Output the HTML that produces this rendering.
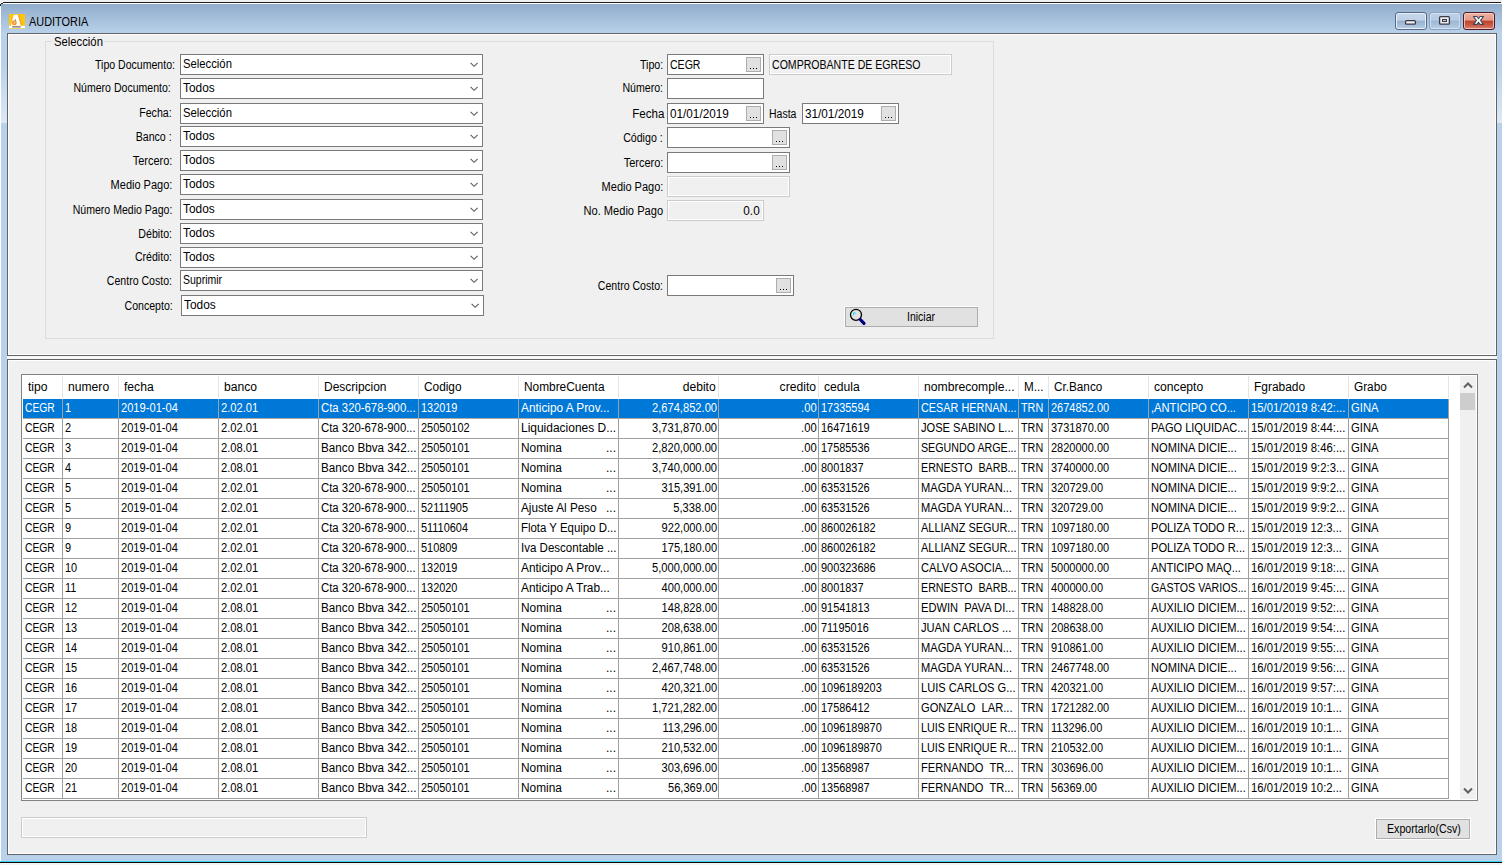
<!DOCTYPE html>
<html><head><meta charset="utf-8"><title>AUDITORIA</title>
<style>
html,body{margin:0;padding:0;width:1502px;height:865px;overflow:hidden;background:#F0F0F0}
body{position:relative;font-family:"Liberation Sans",sans-serif}
body div, body svg{position:absolute;box-sizing:content-box}
.t{white-space:pre}
</style></head><body>
<div style="left:0;top:0;width:1502px;height:865px;background:#F0F0F0"></div>
<div style="left:0px;top:5px;width:1px;height:857px;background:#FFFFFF"></div>
<div style="left:3px;top:2px;width:1498px;height:1px;background:#1E1E1E"></div>
<div style="left:1px;top:3px;width:2px;height:1px;background:#2A2A2A"></div>
<div style="left:0px;top:4px;width:1px;height:2px;background:#2A2A2A"></div>
<div style="left:3px;top:3px;width:1498px;height:1px;background:#FFFFFF"></div>
<div style="left:1px;top:4px;width:1501px;height:29px;background:linear-gradient(#92ADCB,#B9D1EA)"></div>
<div style="left:1px;top:33px;width:6px;height:828px;background:#B9D1EA"></div>
<div style="left:1497px;top:33px;width:5px;height:828px;background:#B9D1EA"></div>
<div style="left:1px;top:855px;width:1501px;height:6px;background:#B9D1EA"></div>
<div style="left:1px;top:66px;width:6px;height:57px;background:linear-gradient(#B9D1EA,#DDE9F6)"></div>
<div style="left:1497px;top:66px;width:5px;height:57px;background:linear-gradient(#B9D1EA,#DDE9F6)"></div>
<div style="left:0px;top:861px;width:1502px;height:1px;background:#38D6F0"></div>
<div style="left:0px;top:862px;width:1502px;height:1px;background:#080808"></div>
<div style="left:0px;top:863px;width:1502px;height:2px;background:#F4F4F4"></div>
<svg style="left:9px;top:14px" width="16" height="15" viewBox="0 0 16 15">
<rect x="0" y="0" width="16" height="15" fill="#FFC40C"/>
<polygon points="4.8,0.8 9,0.8 12,11.8 1.8,11.8" fill="#FFFFFF"/>
<polygon points="9,0.8 10.2,0.8 13.2,11.8 12,11.8" fill="#F0A418"/>
<circle cx="5.3" cy="8.8" r="2.5" fill="#F39A3A"/>
<circle cx="5.3" cy="8.8" r="1" fill="#F8C08A"/>
<rect x="6" y="5" width="1" height="2" fill="#8AA6C8"/>
<rect x="0" y="11.8" width="16" height="2.2" fill="#FFFFFF"/>
<rect x="3.2" y="12.4" width="8.5" height="1" fill="#4A4A4A"/>
<rect x="0" y="14" width="16" height="1" fill="#EBD27A"/>
</svg>
<div class="t" style="top:16px;font-size:12px;line-height:12px;color:#000;left:29px;"><span style="display:inline-block;transform:scaleX(0.91);transform-origin:left">AUDITORIA</span></div>
<div style="left:1395px;top:12px;width:30px;height:16px;border:1px solid #56698A;border-radius:3px;background:linear-gradient(#C4D6EA 0%,#BFD2E8 45%,#97B0CB 50%,#A5BFDA 75%,#B8CFE8 100%);box-shadow:inset 0 0 0 1px rgba(235,243,252,0.9)"></div>
<div style="left:1429px;top:12px;width:30px;height:16px;border:1px solid #8AA2BF;border-radius:3px;background:linear-gradient(#BCD0E6 0%,#B6CBE3 45%,#9EB8D3 50%,#A9C2DC 75%,#B7CEE6 100%);box-shadow:inset 0 0 0 1px rgba(230,240,250,0.6)"></div>
<div style="left:1463px;top:12px;width:30px;height:16px;border:1px solid #4A1A28;border-radius:3px;background:linear-gradient(#EDB0A2 0%,#E49B88 45%,#C0412A 50%,#C75A43 75%,#D88572 100%);box-shadow:inset 0 0 0 1px rgba(255,220,210,0.7)"></div>
<svg style="left:1404px;top:19px" width="13" height="7" viewBox="0 0 13 7">
<rect x="1.6" y="1.6" width="9.8" height="3.6" rx="1" fill="#F2F2F2" stroke="#3A3A48" stroke-width="1.3"/></svg>
<svg style="left:1438px;top:15px" width="13" height="11" viewBox="0 0 13 11">
<rect x="1.6" y="1.6" width="9.8" height="7.6" rx="1" fill="#EDEDED" stroke="#3A3A48" stroke-width="1.3"/>
<rect x="4.5" y="4.5" width="4" height="2" fill="#B5CAE2" stroke="#3A3A48" stroke-width="1"/></svg>
<svg style="left:1472px;top:15px" width="13" height="11" viewBox="0 0 13 11">
<polygon points="1.5,1.5 5,1.5 6.5,3.7 8,1.5 11.5,1.5 8.6,5.4 11.5,9.4 8,9.4 6.5,7.2 5,9.4 1.5,9.4 4.4,5.4" fill="#FFFFFF" stroke="#3C4456" stroke-width="1.1" stroke-linejoin="round"/>
</svg>
<div style="left:7px;top:33px;width:1488px;height:321px;border:1px solid #646464;background:#F0F0F0;box-shadow:inset 0 0 0 1px #FFFFFF"></div>
<div style="left:7px;top:356px;width:1490px;height:3px;background:#F8F8F8"></div>
<div style="left:7px;top:359px;width:1488px;height:494px;border:1px solid #646464;background:#F0F0F0;box-shadow:inset 0 0 0 1px #FFFFFF"></div>
<div style="left:45px;top:41px;width:947px;height:296px;border:1px solid #DCDCDC"></div>
<div style="left:52px;top:38px;width:52px;height:6px;background:#F0F0F0"></div>
<div class="t" style="top:36px;font-size:12px;line-height:12px;color:#000;left:54px;"><span style="display:inline-block;transform:scaleX(0.94);transform-origin:left">Selección</span></div>
<div style="left:180px;top:54px;width:301px;height:19px;border:1px solid #7A7A7A;background:#FFFFFF"></div>
<div class="t" style="top:59px;font-size:12px;line-height:12px;color:#000;right:1327px;text-align:right;"><span style="display:inline-block;transform:scaleX(0.879);transform-origin:right">Tipo Documento:</span></div>
<div class="t" style="top:58px;font-size:12px;line-height:12px;color:#000;left:183px;"><span style="display:inline-block;transform:scaleX(0.94);transform-origin:left">Selección</span></div>
<svg style="left:470px;top:62px" width="9" height="6" viewBox="0 0 9 6"><path d="M0.6,0.8 L4.1,4.3 L7.6,0.8" fill="none" stroke="#5A5A5A" stroke-width="1.1"/></svg>
<div style="left:180px;top:78px;width:301px;height:19px;border:1px solid #7A7A7A;background:#FFFFFF"></div>
<div class="t" style="top:82px;font-size:12px;line-height:12px;color:#000;right:1331px;text-align:right;"><span style="display:inline-block;transform:scaleX(0.878);transform-origin:right">Número Documento:</span></div>
<div class="t" style="top:82px;font-size:12px;line-height:12px;color:#000;left:183px;"><span style="display:inline-block;transform:scaleX(0.99);transform-origin:left">Todos</span></div>
<svg style="left:470px;top:86px" width="9" height="6" viewBox="0 0 9 6"><path d="M0.6,0.8 L4.1,4.3 L7.6,0.8" fill="none" stroke="#5A5A5A" stroke-width="1.1"/></svg>
<div style="left:180px;top:103px;width:301px;height:19px;border:1px solid #7A7A7A;background:#FFFFFF"></div>
<div class="t" style="top:107px;font-size:12px;line-height:12px;color:#000;right:1330px;text-align:right;"><span style="display:inline-block;transform:scaleX(0.885);transform-origin:right">Fecha:</span></div>
<div class="t" style="top:107px;font-size:12px;line-height:12px;color:#000;left:183px;"><span style="display:inline-block;transform:scaleX(0.94);transform-origin:left">Selección</span></div>
<svg style="left:470px;top:111px" width="9" height="6" viewBox="0 0 9 6"><path d="M0.6,0.8 L4.1,4.3 L7.6,0.8" fill="none" stroke="#5A5A5A" stroke-width="1.1"/></svg>
<div style="left:180px;top:126px;width:301px;height:19px;border:1px solid #7A7A7A;background:#FFFFFF"></div>
<div class="t" style="top:131px;font-size:12px;line-height:12px;color:#000;right:1330px;text-align:right;"><span style="display:inline-block;transform:scaleX(0.886);transform-origin:right">Banco :</span></div>
<div class="t" style="top:130px;font-size:12px;line-height:12px;color:#000;left:183px;"><span style="display:inline-block;transform:scaleX(0.99);transform-origin:left">Todos</span></div>
<svg style="left:470px;top:134px" width="9" height="6" viewBox="0 0 9 6"><path d="M0.6,0.8 L4.1,4.3 L7.6,0.8" fill="none" stroke="#5A5A5A" stroke-width="1.1"/></svg>
<div style="left:180px;top:150px;width:301px;height:19px;border:1px solid #7A7A7A;background:#FFFFFF"></div>
<div class="t" style="top:155px;font-size:12px;line-height:12px;color:#000;right:1330px;text-align:right;"><span style="display:inline-block;transform:scaleX(0.914);transform-origin:right">Tercero:</span></div>
<div class="t" style="top:154px;font-size:12px;line-height:12px;color:#000;left:183px;"><span style="display:inline-block;transform:scaleX(0.99);transform-origin:left">Todos</span></div>
<svg style="left:470px;top:158px" width="9" height="6" viewBox="0 0 9 6"><path d="M0.6,0.8 L4.1,4.3 L7.6,0.8" fill="none" stroke="#5A5A5A" stroke-width="1.1"/></svg>
<div style="left:180px;top:174px;width:301px;height:19px;border:1px solid #7A7A7A;background:#FFFFFF"></div>
<div class="t" style="top:179px;font-size:12px;line-height:12px;color:#000;right:1330px;text-align:right;"><span style="display:inline-block;transform:scaleX(0.917);transform-origin:right">Medio Pago:</span></div>
<div class="t" style="top:178px;font-size:12px;line-height:12px;color:#000;left:183px;"><span style="display:inline-block;transform:scaleX(0.99);transform-origin:left">Todos</span></div>
<svg style="left:470px;top:182px" width="9" height="6" viewBox="0 0 9 6"><path d="M0.6,0.8 L4.1,4.3 L7.6,0.8" fill="none" stroke="#5A5A5A" stroke-width="1.1"/></svg>
<div style="left:180px;top:199px;width:301px;height:19px;border:1px solid #7A7A7A;background:#FFFFFF"></div>
<div class="t" style="top:204px;font-size:12px;line-height:12px;color:#000;right:1330px;text-align:right;"><span style="display:inline-block;transform:scaleX(0.879);transform-origin:right">Número Medio Pago:</span></div>
<div class="t" style="top:203px;font-size:12px;line-height:12px;color:#000;left:183px;"><span style="display:inline-block;transform:scaleX(0.99);transform-origin:left">Todos</span></div>
<svg style="left:470px;top:207px" width="9" height="6" viewBox="0 0 9 6"><path d="M0.6,0.8 L4.1,4.3 L7.6,0.8" fill="none" stroke="#5A5A5A" stroke-width="1.1"/></svg>
<div style="left:180px;top:223px;width:301px;height:19px;border:1px solid #7A7A7A;background:#FFFFFF"></div>
<div class="t" style="top:228px;font-size:12px;line-height:12px;color:#000;right:1330px;text-align:right;"><span style="display:inline-block;transform:scaleX(0.885);transform-origin:right">Débito:</span></div>
<div class="t" style="top:227px;font-size:12px;line-height:12px;color:#000;left:183px;"><span style="display:inline-block;transform:scaleX(0.99);transform-origin:left">Todos</span></div>
<svg style="left:470px;top:231px" width="9" height="6" viewBox="0 0 9 6"><path d="M0.6,0.8 L4.1,4.3 L7.6,0.8" fill="none" stroke="#5A5A5A" stroke-width="1.1"/></svg>
<div style="left:180px;top:247px;width:301px;height:19px;border:1px solid #7A7A7A;background:#FFFFFF"></div>
<div class="t" style="top:251px;font-size:12px;line-height:12px;color:#000;right:1330px;text-align:right;"><span style="display:inline-block;transform:scaleX(0.884);transform-origin:right">Crédito:</span></div>
<div class="t" style="top:251px;font-size:12px;line-height:12px;color:#000;left:183px;"><span style="display:inline-block;transform:scaleX(0.99);transform-origin:left">Todos</span></div>
<svg style="left:470px;top:255px" width="9" height="6" viewBox="0 0 9 6"><path d="M0.6,0.8 L4.1,4.3 L7.6,0.8" fill="none" stroke="#5A5A5A" stroke-width="1.1"/></svg>
<div style="left:180px;top:270px;width:301px;height:19px;border:1px solid #7A7A7A;background:#FFFFFF"></div>
<div class="t" style="top:275px;font-size:12px;line-height:12px;color:#000;right:1330px;text-align:right;"><span style="display:inline-block;transform:scaleX(0.881);transform-origin:right">Centro Costo:</span></div>
<div class="t" style="top:274px;font-size:12px;line-height:12px;color:#000;left:183px;"><span style="display:inline-block;transform:scaleX(0.873);transform-origin:left">Suprimir</span></div>
<svg style="left:470px;top:278px" width="9" height="6" viewBox="0 0 9 6"><path d="M0.6,0.8 L4.1,4.3 L7.6,0.8" fill="none" stroke="#5A5A5A" stroke-width="1.1"/></svg>
<div style="left:181px;top:295px;width:301px;height:19px;border:1px solid #7A7A7A;background:#FFFFFF"></div>
<div class="t" style="top:300px;font-size:12px;line-height:12px;color:#000;right:1329px;text-align:right;"><span style="display:inline-block;transform:scaleX(0.881);transform-origin:right">Concepto:</span></div>
<div class="t" style="top:299px;font-size:12px;line-height:12px;color:#000;left:184px;"><span style="display:inline-block;transform:scaleX(0.99);transform-origin:left">Todos</span></div>
<svg style="left:471px;top:303px" width="9" height="6" viewBox="0 0 9 6"><path d="M0.6,0.8 L4.1,4.3 L7.6,0.8" fill="none" stroke="#5A5A5A" stroke-width="1.1"/></svg>
<div class="t" style="top:59px;font-size:12px;line-height:12px;color:#000;right:839px;text-align:right;"><span style="display:inline-block;transform:scaleX(0.89);transform-origin:right">Tipo:</span></div>
<div style="left:667px;top:54px;width:95px;height:19px;border:1px solid #7A7A7A;background:#FFFFFF"></div>
<div style="left:746px;top:57px;width:13px;height:13px;border:1px solid #ADADAD;background:#E1E1E1"></div>
<div style="left:750px;top:68px;width:1px;height:1px;background:#000"></div>
<div style="left:753px;top:68px;width:1px;height:1px;background:#000"></div>
<div style="left:756px;top:68px;width:1px;height:1px;background:#000"></div>
<div class="t" style="top:59px;font-size:12px;line-height:12px;color:#000;left:670px;"><span style="display:inline-block;transform:scaleX(0.879);transform-origin:left">CEGR</span></div>
<div style="left:769px;top:54px;width:181px;height:19px;border:1px solid #CCCCCC;background:#F0F0F0;box-shadow:inset 0 0 0 1px #FFFFFF"></div>
<div class="t" style="top:59px;font-size:12px;line-height:12px;color:#000;left:772px;"><span style="display:inline-block;transform:scaleX(0.88);transform-origin:left">COMPROBANTE DE EGRESO</span></div>
<div class="t" style="top:82px;font-size:12px;line-height:12px;color:#000;right:839px;text-align:right;"><span style="display:inline-block;transform:scaleX(0.883);transform-origin:right">Número:</span></div>
<div style="left:667px;top:78px;width:95px;height:19px;border:1px solid #7A7A7A;background:#FFFFFF"></div>
<div class="t" style="top:108px;font-size:12px;line-height:12px;color:#000;right:838px;text-align:right;"><span style="display:inline-block;transform:scaleX(0.961);transform-origin:right">Fecha</span></div>
<div style="left:667px;top:103px;width:95px;height:19px;border:1px solid #7A7A7A;background:#FFFFFF"></div>
<div style="left:746px;top:106px;width:13px;height:13px;border:1px solid #ADADAD;background:#E1E1E1"></div>
<div style="left:750px;top:117px;width:1px;height:1px;background:#000"></div>
<div style="left:753px;top:117px;width:1px;height:1px;background:#000"></div>
<div style="left:756px;top:117px;width:1px;height:1px;background:#000"></div>
<div class="t" style="top:108px;font-size:12px;line-height:12px;color:#000;left:670px;"><span style="display:inline-block;transform:scaleX(0.979);transform-origin:left">01/01/2019</span></div>
<div class="t" style="top:108px;font-size:12px;line-height:12px;color:#000;left:769px;"><span style="display:inline-block;transform:scaleX(0.874);transform-origin:left">Hasta</span></div>
<div style="left:802px;top:103px;width:95px;height:19px;border:1px solid #7A7A7A;background:#FFFFFF"></div>
<div style="left:881px;top:106px;width:13px;height:13px;border:1px solid #ADADAD;background:#E1E1E1"></div>
<div style="left:885px;top:117px;width:1px;height:1px;background:#000"></div>
<div style="left:888px;top:117px;width:1px;height:1px;background:#000"></div>
<div style="left:891px;top:117px;width:1px;height:1px;background:#000"></div>
<div class="t" style="top:108px;font-size:12px;line-height:12px;color:#000;left:805px;"><span style="display:inline-block;transform:scaleX(0.979);transform-origin:left">31/01/2019</span></div>
<div class="t" style="top:132px;font-size:12px;line-height:12px;color:#000;right:839px;text-align:right;"><span style="display:inline-block;transform:scaleX(0.885);transform-origin:right">Código :</span></div>
<div style="left:667px;top:127px;width:121px;height:19px;border:1px solid #7A7A7A;background:#FFFFFF"></div>
<div style="left:772px;top:130px;width:13px;height:13px;border:1px solid #ADADAD;background:#E1E1E1"></div>
<div style="left:776px;top:141px;width:1px;height:1px;background:#000"></div>
<div style="left:779px;top:141px;width:1px;height:1px;background:#000"></div>
<div style="left:782px;top:141px;width:1px;height:1px;background:#000"></div>
<div class="t" style="top:157px;font-size:12px;line-height:12px;color:#000;right:839px;text-align:right;"><span style="display:inline-block;transform:scaleX(0.914);transform-origin:right">Tercero:</span></div>
<div style="left:667px;top:152px;width:121px;height:19px;border:1px solid #7A7A7A;background:#FFFFFF"></div>
<div style="left:772px;top:155px;width:13px;height:13px;border:1px solid #ADADAD;background:#E1E1E1"></div>
<div style="left:776px;top:166px;width:1px;height:1px;background:#000"></div>
<div style="left:779px;top:166px;width:1px;height:1px;background:#000"></div>
<div style="left:782px;top:166px;width:1px;height:1px;background:#000"></div>
<div class="t" style="top:181px;font-size:12px;line-height:12px;color:#000;right:839px;text-align:right;"><span style="display:inline-block;transform:scaleX(0.917);transform-origin:right">Medio Pago:</span></div>
<div style="left:667px;top:176px;width:121px;height:19px;border:1px solid #CCCCCC;background:#F0F0F0;box-shadow:inset 0 0 0 1px #FFFFFF"></div>
<div class="t" style="top:205px;font-size:12px;line-height:12px;color:#000;right:839px;text-align:right;"><span style="display:inline-block;transform:scaleX(0.925);transform-origin:right">No. Medio Pago</span></div>
<div style="left:667px;top:200px;width:95px;height:19px;border:1px solid #CCCCCC;background:#F0F0F0;box-shadow:inset 0 0 0 1px #FFFFFF"></div>
<div class="t" style="top:205px;font-size:12px;line-height:12px;color:#000;right:742px;text-align:right;"><span style="display:inline-block;transform:scaleX(0.981);transform-origin:right">0.0</span></div>
<div class="t" style="top:280px;font-size:12px;line-height:12px;color:#000;right:839px;text-align:right;"><span style="display:inline-block;transform:scaleX(0.881);transform-origin:right">Centro Costo:</span></div>
<div style="left:667px;top:275px;width:125px;height:19px;border:1px solid #7A7A7A;background:#FFFFFF"></div>
<div style="left:776px;top:278px;width:13px;height:13px;border:1px solid #ADADAD;background:#E1E1E1"></div>
<div style="left:780px;top:289px;width:1px;height:1px;background:#000"></div>
<div style="left:783px;top:289px;width:1px;height:1px;background:#000"></div>
<div style="left:786px;top:289px;width:1px;height:1px;background:#000"></div>
<div style="left:844px;top:306px;width:132px;height:19px;border:1px solid #FFFFFF"></div>
<div style="left:845px;top:307px;width:131px;height:18px;border:1px solid #ADADAD;background:#E1E1E1"></div>
<svg style="left:849px;top:308px" width="18" height="18" viewBox="0 0 18 18">
<circle cx="7" cy="6.8" r="5.5" fill="none" stroke="#000" stroke-width="1.3"/>
<path d="M4.6,7.2 L4.6,5 L6.9,5" fill="none" stroke="#10E4F4" stroke-width="1.2"/>
<path d="M11.3,11.5 L15,15.4" stroke="#000080" stroke-width="3.2" stroke-linecap="round"/>
</svg>
<div class="t" style="top:311px;font-size:12px;line-height:12px;color:#000;left:907px;"><span style="display:inline-block;transform:scaleX(0.873);transform-origin:left">Iniciar</span></div>
<div style="left:21px;top:374px;width:1455px;height:425px;border:1px solid #828282;background:#FFFFFF"></div>
<div style="left:62px;top:376px;width:1px;height:22px;background:#E5E5E5"></div>
<div class="t" style="top:381px;font-size:12px;line-height:12px;color:#000;left:28px;white-space:pre;"><span style="display:inline-block;transform:scaleX(1.011);transform-origin:left">tipo</span></div>
<div style="left:118px;top:376px;width:1px;height:22px;background:#E5E5E5"></div>
<div class="t" style="top:381px;font-size:12px;line-height:12px;color:#000;left:68px;white-space:pre;"><span style="display:inline-block;transform:scaleX(1.011);transform-origin:left">numero</span></div>
<div style="left:218px;top:376px;width:1px;height:22px;background:#E5E5E5"></div>
<div class="t" style="top:381px;font-size:12px;line-height:12px;color:#000;left:124px;white-space:pre;"><span style="display:inline-block;transform:scaleX(1.011);transform-origin:left">fecha</span></div>
<div style="left:318px;top:376px;width:1px;height:22px;background:#E5E5E5"></div>
<div class="t" style="top:381px;font-size:12px;line-height:12px;color:#000;left:224px;white-space:pre;"><span style="display:inline-block;transform:scaleX(1.011);transform-origin:left">banco</span></div>
<div style="left:418px;top:376px;width:1px;height:22px;background:#E5E5E5"></div>
<div class="t" style="top:381px;font-size:12px;line-height:12px;color:#000;left:324px;white-space:pre;"><span style="display:inline-block;transform:scaleX(0.997);transform-origin:left">Descripcion</span></div>
<div style="left:518px;top:376px;width:1px;height:22px;background:#E5E5E5"></div>
<div class="t" style="top:381px;font-size:12px;line-height:12px;color:#000;left:424px;white-space:pre;"><span style="display:inline-block;transform:scaleX(0.987);transform-origin:left">Codigo</span></div>
<div style="left:618px;top:376px;width:1px;height:22px;background:#E5E5E5"></div>
<div class="t" style="top:381px;font-size:12px;line-height:12px;color:#000;left:524px;white-space:pre;"><span style="display:inline-block;transform:scaleX(0.989);transform-origin:left">NombreCuenta</span></div>
<div style="left:718px;top:376px;width:1px;height:22px;background:#E5E5E5"></div>
<div class="t" style="top:381px;font-size:12px;line-height:12px;color:#000;right:786px;text-align:right;"><span style="display:inline-block;transform:scaleX(1.011);transform-origin:right">debito</span></div>
<div style="left:818px;top:376px;width:1px;height:22px;background:#E5E5E5"></div>
<div class="t" style="top:381px;font-size:12px;line-height:12px;color:#000;right:686px;text-align:right;"><span style="display:inline-block;transform:scaleX(1.011);transform-origin:right">credito</span></div>
<div style="left:918px;top:376px;width:1px;height:22px;background:#E5E5E5"></div>
<div class="t" style="top:381px;font-size:12px;line-height:12px;color:#000;left:824px;white-space:pre;"><span style="display:inline-block;transform:scaleX(1.011);transform-origin:left">cedula</span></div>
<div style="left:1018px;top:376px;width:1px;height:22px;background:#E5E5E5"></div>
<div class="t" style="top:381px;font-size:12px;line-height:12px;color:#000;left:924px;white-space:pre;"><span style="display:inline-block;transform:scaleX(1.014);transform-origin:left">nombrecomple...</span></div>
<div style="left:1048px;top:376px;width:1px;height:22px;background:#E5E5E5"></div>
<div class="t" style="top:381px;font-size:12px;line-height:12px;color:#000;left:1024px;white-space:pre;"><span style="display:inline-block;transform:scaleX(0.974);transform-origin:left">M...</span></div>
<div style="left:1148px;top:376px;width:1px;height:22px;background:#E5E5E5"></div>
<div class="t" style="top:381px;font-size:12px;line-height:12px;color:#000;left:1054px;white-space:pre;"><span style="display:inline-block;transform:scaleX(0.978);transform-origin:left">Cr.Banco</span></div>
<div style="left:1248px;top:376px;width:1px;height:22px;background:#E5E5E5"></div>
<div class="t" style="top:381px;font-size:12px;line-height:12px;color:#000;left:1154px;white-space:pre;"><span style="display:inline-block;transform:scaleX(1.011);transform-origin:left">concepto</span></div>
<div style="left:1348px;top:376px;width:1px;height:22px;background:#E5E5E5"></div>
<div class="t" style="top:381px;font-size:12px;line-height:12px;color:#000;left:1254px;white-space:pre;"><span style="display:inline-block;transform:scaleX(0.996);transform-origin:left">Fgrabado</span></div>
<div style="left:1448px;top:376px;width:1px;height:22px;background:#E5E5E5"></div>
<div class="t" style="top:381px;font-size:12px;line-height:12px;color:#000;left:1354px;white-space:pre;"><span style="display:inline-block;transform:scaleX(0.982);transform-origin:left">Grabo</span></div>
<div style="left:23px;top:399px;width:1426px;height:19px;background:#0078D7"></div>
<div style="left:23px;top:418px;width:1426px;height:1px;background:#B0A8A0"></div>
<div style="left:62px;top:399px;width:1px;height:20px;background:#A0A0A0"></div>
<div style="left:23px;top:399px;width:39px;height:19px;overflow:hidden"><div class="t" style="left:2px;top:3px;font-size:12px;line-height:12px;color:#FFFFFF"><span style="display:inline-block;transform:scaleX(0.86);transform-origin:left">CEGR</span></div></div>
<div style="left:118px;top:399px;width:1px;height:20px;background:#A0A0A0"></div>
<div style="left:63px;top:399px;width:55px;height:19px;overflow:hidden"><div class="t" style="left:2px;top:3px;font-size:12px;line-height:12px;color:#FFFFFF"><span style="display:inline-block;transform:scaleX(0.91);transform-origin:left">1</span></div></div>
<div style="left:218px;top:399px;width:1px;height:20px;background:#A0A0A0"></div>
<div style="left:119px;top:399px;width:99px;height:19px;overflow:hidden"><div class="t" style="left:2px;top:3px;font-size:12px;line-height:12px;color:#FFFFFF"><span style="display:inline-block;transform:scaleX(0.927);transform-origin:left">2019-01-04</span></div></div>
<div style="left:318px;top:399px;width:1px;height:20px;background:#A0A0A0"></div>
<div style="left:219px;top:399px;width:99px;height:19px;overflow:hidden"><div class="t" style="left:2px;top:3px;font-size:12px;line-height:12px;color:#FFFFFF"><span style="display:inline-block;transform:scaleX(0.932);transform-origin:left">2.02.01</span></div></div>
<div style="left:418px;top:399px;width:1px;height:20px;background:#A0A0A0"></div>
<div style="left:319px;top:399px;width:99px;height:19px;overflow:hidden"><div class="t" style="left:2px;top:3px;font-size:12px;line-height:12px;color:#FFFFFF"><span style="display:inline-block;transform:scaleX(0.946);transform-origin:left">Cta 320-678-900...</span></div></div>
<div style="left:518px;top:399px;width:1px;height:20px;background:#A0A0A0"></div>
<div style="left:419px;top:399px;width:99px;height:19px;overflow:hidden"><div class="t" style="left:2px;top:3px;font-size:12px;line-height:12px;color:#FFFFFF"><span style="display:inline-block;transform:scaleX(0.91);transform-origin:left">132019</span></div></div>
<div style="left:618px;top:399px;width:1px;height:20px;background:#A0A0A0"></div>
<div style="left:519px;top:399px;width:99px;height:19px;overflow:hidden"><div class="t" style="left:2px;top:3px;font-size:12px;line-height:12px;color:#FFFFFF"><span style="display:inline-block;transform:scaleX(0.986);transform-origin:left">Anticipo A Prov...</span></div></div>
<div style="left:718px;top:399px;width:1px;height:20px;background:#A0A0A0"></div>
<div class="t" style="top:402px;font-size:12px;line-height:12px;color:#FFFFFF;right:785px;text-align:right;"><span style="display:inline-block;transform:scaleX(0.929);transform-origin:right">2,674,852.00</span></div>
<div style="left:818px;top:399px;width:1px;height:20px;background:#A0A0A0"></div>
<div class="t" style="top:402px;font-size:12px;line-height:12px;color:#FFFFFF;right:685px;text-align:right;"><span style="display:inline-block;transform:scaleX(0.936);transform-origin:right">.00</span></div>
<div style="left:918px;top:399px;width:1px;height:20px;background:#A0A0A0"></div>
<div style="left:819px;top:399px;width:99px;height:19px;overflow:hidden"><div class="t" style="left:2px;top:3px;font-size:12px;line-height:12px;color:#FFFFFF"><span style="display:inline-block;transform:scaleX(0.91);transform-origin:left">17335594</span></div></div>
<div style="left:1018px;top:399px;width:1px;height:20px;background:#A0A0A0"></div>
<div style="left:919px;top:399px;width:99px;height:19px;overflow:hidden"><div class="t" style="left:2px;top:3px;font-size:12px;line-height:12px;color:#FFFFFF"><span style="display:inline-block;transform:scaleX(0.906);transform-origin:left">CESAR HERNAN...</span></div></div>
<div style="left:1048px;top:399px;width:1px;height:20px;background:#A0A0A0"></div>
<div style="left:1019px;top:399px;width:29px;height:19px;overflow:hidden"><div class="t" style="left:2px;top:3px;font-size:12px;line-height:12px;color:#FFFFFF"><span style="display:inline-block;transform:scaleX(0.9);transform-origin:left">TRN</span></div></div>
<div style="left:1148px;top:399px;width:1px;height:20px;background:#A0A0A0"></div>
<div style="left:1049px;top:399px;width:99px;height:19px;overflow:hidden"><div class="t" style="left:2px;top:3px;font-size:12px;line-height:12px;color:#FFFFFF"><span style="display:inline-block;transform:scaleX(0.917);transform-origin:left">2674852.00</span></div></div>
<div style="left:1248px;top:399px;width:1px;height:20px;background:#A0A0A0"></div>
<div style="left:1149px;top:399px;width:99px;height:19px;overflow:hidden"><div class="t" style="left:2px;top:3px;font-size:12px;line-height:12px;color:#FFFFFF"><span style="display:inline-block;transform:scaleX(0.93);transform-origin:left">,ANTICIPO CO...</span></div></div>
<div style="left:1348px;top:399px;width:1px;height:20px;background:#A0A0A0"></div>
<div style="left:1249px;top:399px;width:99px;height:19px;overflow:hidden"><div class="t" style="left:2px;top:3px;font-size:12px;line-height:12px;color:#FFFFFF"><span style="display:inline-block;transform:scaleX(0.943);transform-origin:left">15/01/2019 8:42:...</span></div></div>
<div style="left:1448px;top:399px;width:1px;height:20px;background:#A0A0A0"></div>
<div style="left:1349px;top:399px;width:99px;height:19px;overflow:hidden"><div class="t" style="left:2px;top:3px;font-size:12px;line-height:12px;color:#FFFFFF"><span style="display:inline-block;transform:scaleX(0.94);transform-origin:left">GINA</span></div></div>
<div style="left:23px;top:438px;width:1426px;height:1px;background:#A0A0A0"></div>
<div style="left:62px;top:419px;width:1px;height:20px;background:#A0A0A0"></div>
<div style="left:23px;top:419px;width:39px;height:19px;overflow:hidden"><div class="t" style="left:2px;top:3px;font-size:12px;line-height:12px;color:#000000"><span style="display:inline-block;transform:scaleX(0.86);transform-origin:left">CEGR</span></div></div>
<div style="left:118px;top:419px;width:1px;height:20px;background:#A0A0A0"></div>
<div style="left:63px;top:419px;width:55px;height:19px;overflow:hidden"><div class="t" style="left:2px;top:3px;font-size:12px;line-height:12px;color:#000000"><span style="display:inline-block;transform:scaleX(0.91);transform-origin:left">2</span></div></div>
<div style="left:218px;top:419px;width:1px;height:20px;background:#A0A0A0"></div>
<div style="left:119px;top:419px;width:99px;height:19px;overflow:hidden"><div class="t" style="left:2px;top:3px;font-size:12px;line-height:12px;color:#000000"><span style="display:inline-block;transform:scaleX(0.927);transform-origin:left">2019-01-04</span></div></div>
<div style="left:318px;top:419px;width:1px;height:20px;background:#A0A0A0"></div>
<div style="left:219px;top:419px;width:99px;height:19px;overflow:hidden"><div class="t" style="left:2px;top:3px;font-size:12px;line-height:12px;color:#000000"><span style="display:inline-block;transform:scaleX(0.932);transform-origin:left">2.02.01</span></div></div>
<div style="left:418px;top:419px;width:1px;height:20px;background:#A0A0A0"></div>
<div style="left:319px;top:419px;width:99px;height:19px;overflow:hidden"><div class="t" style="left:2px;top:3px;font-size:12px;line-height:12px;color:#000000"><span style="display:inline-block;transform:scaleX(0.946);transform-origin:left">Cta 320-678-900...</span></div></div>
<div style="left:518px;top:419px;width:1px;height:20px;background:#A0A0A0"></div>
<div style="left:419px;top:419px;width:99px;height:19px;overflow:hidden"><div class="t" style="left:2px;top:3px;font-size:12px;line-height:12px;color:#000000"><span style="display:inline-block;transform:scaleX(0.91);transform-origin:left">25050102</span></div></div>
<div style="left:618px;top:419px;width:1px;height:20px;background:#A0A0A0"></div>
<div style="left:519px;top:419px;width:99px;height:19px;overflow:hidden"><div class="t" style="left:2px;top:3px;font-size:12px;line-height:12px;color:#000000"><span style="display:inline-block;transform:scaleX(0.997);transform-origin:left">Liquidaciones D...</span></div></div>
<div style="left:718px;top:419px;width:1px;height:20px;background:#A0A0A0"></div>
<div class="t" style="top:422px;font-size:12px;line-height:12px;color:#000000;right:785px;text-align:right;"><span style="display:inline-block;transform:scaleX(0.929);transform-origin:right">3,731,870.00</span></div>
<div style="left:818px;top:419px;width:1px;height:20px;background:#A0A0A0"></div>
<div class="t" style="top:422px;font-size:12px;line-height:12px;color:#000000;right:685px;text-align:right;"><span style="display:inline-block;transform:scaleX(0.936);transform-origin:right">.00</span></div>
<div style="left:918px;top:419px;width:1px;height:20px;background:#A0A0A0"></div>
<div style="left:819px;top:419px;width:99px;height:19px;overflow:hidden"><div class="t" style="left:2px;top:3px;font-size:12px;line-height:12px;color:#000000"><span style="display:inline-block;transform:scaleX(0.91);transform-origin:left">16471619</span></div></div>
<div style="left:1018px;top:419px;width:1px;height:20px;background:#A0A0A0"></div>
<div style="left:919px;top:419px;width:99px;height:19px;overflow:hidden"><div class="t" style="left:2px;top:3px;font-size:12px;line-height:12px;color:#000000"><span style="display:inline-block;transform:scaleX(0.926);transform-origin:left">JOSE SABINO L...</span></div></div>
<div style="left:1048px;top:419px;width:1px;height:20px;background:#A0A0A0"></div>
<div style="left:1019px;top:419px;width:29px;height:19px;overflow:hidden"><div class="t" style="left:2px;top:3px;font-size:12px;line-height:12px;color:#000000"><span style="display:inline-block;transform:scaleX(0.9);transform-origin:left">TRN</span></div></div>
<div style="left:1148px;top:419px;width:1px;height:20px;background:#A0A0A0"></div>
<div style="left:1049px;top:419px;width:99px;height:19px;overflow:hidden"><div class="t" style="left:2px;top:3px;font-size:12px;line-height:12px;color:#000000"><span style="display:inline-block;transform:scaleX(0.917);transform-origin:left">3731870.00</span></div></div>
<div style="left:1248px;top:419px;width:1px;height:20px;background:#A0A0A0"></div>
<div style="left:1149px;top:419px;width:99px;height:19px;overflow:hidden"><div class="t" style="left:2px;top:3px;font-size:12px;line-height:12px;color:#000000"><span style="display:inline-block;transform:scaleX(0.92);transform-origin:left">PAGO LIQUIDAC...</span></div></div>
<div style="left:1348px;top:419px;width:1px;height:20px;background:#A0A0A0"></div>
<div style="left:1249px;top:419px;width:99px;height:19px;overflow:hidden"><div class="t" style="left:2px;top:3px;font-size:12px;line-height:12px;color:#000000"><span style="display:inline-block;transform:scaleX(0.943);transform-origin:left">15/01/2019 8:44:...</span></div></div>
<div style="left:1448px;top:419px;width:1px;height:20px;background:#A0A0A0"></div>
<div style="left:1349px;top:419px;width:99px;height:19px;overflow:hidden"><div class="t" style="left:2px;top:3px;font-size:12px;line-height:12px;color:#000000"><span style="display:inline-block;transform:scaleX(0.94);transform-origin:left">GINA</span></div></div>
<div style="left:23px;top:458px;width:1426px;height:1px;background:#A0A0A0"></div>
<div style="left:62px;top:439px;width:1px;height:20px;background:#A0A0A0"></div>
<div style="left:23px;top:439px;width:39px;height:19px;overflow:hidden"><div class="t" style="left:2px;top:3px;font-size:12px;line-height:12px;color:#000000"><span style="display:inline-block;transform:scaleX(0.86);transform-origin:left">CEGR</span></div></div>
<div style="left:118px;top:439px;width:1px;height:20px;background:#A0A0A0"></div>
<div style="left:63px;top:439px;width:55px;height:19px;overflow:hidden"><div class="t" style="left:2px;top:3px;font-size:12px;line-height:12px;color:#000000"><span style="display:inline-block;transform:scaleX(0.91);transform-origin:left">3</span></div></div>
<div style="left:218px;top:439px;width:1px;height:20px;background:#A0A0A0"></div>
<div style="left:119px;top:439px;width:99px;height:19px;overflow:hidden"><div class="t" style="left:2px;top:3px;font-size:12px;line-height:12px;color:#000000"><span style="display:inline-block;transform:scaleX(0.927);transform-origin:left">2019-01-04</span></div></div>
<div style="left:318px;top:439px;width:1px;height:20px;background:#A0A0A0"></div>
<div style="left:219px;top:439px;width:99px;height:19px;overflow:hidden"><div class="t" style="left:2px;top:3px;font-size:12px;line-height:12px;color:#000000"><span style="display:inline-block;transform:scaleX(0.932);transform-origin:left">2.08.01</span></div></div>
<div style="left:418px;top:439px;width:1px;height:20px;background:#A0A0A0"></div>
<div style="left:319px;top:439px;width:99px;height:19px;overflow:hidden"><div class="t" style="left:2px;top:3px;font-size:12px;line-height:12px;color:#000000"><span style="display:inline-block;transform:scaleX(0.974);transform-origin:left">Banco Bbva 342...</span></div></div>
<div style="left:518px;top:439px;width:1px;height:20px;background:#A0A0A0"></div>
<div style="left:419px;top:439px;width:99px;height:19px;overflow:hidden"><div class="t" style="left:2px;top:3px;font-size:12px;line-height:12px;color:#000000"><span style="display:inline-block;transform:scaleX(0.91);transform-origin:left">25050101</span></div></div>
<div style="left:618px;top:439px;width:1px;height:20px;background:#A0A0A0"></div>
<div class="t" style="top:442px;font-size:12px;line-height:12px;color:#000000;left:521px;"><span style="display:inline-block;transform:scaleX(0.989);transform-origin:left">Nomina</span></div>
<div class="t" style="top:442px;font-size:12px;line-height:12px;color:#000000;right:886px;text-align:right;">...</div>
<div style="left:718px;top:439px;width:1px;height:20px;background:#A0A0A0"></div>
<div class="t" style="top:442px;font-size:12px;line-height:12px;color:#000000;right:785px;text-align:right;"><span style="display:inline-block;transform:scaleX(0.929);transform-origin:right">2,820,000.00</span></div>
<div style="left:818px;top:439px;width:1px;height:20px;background:#A0A0A0"></div>
<div class="t" style="top:442px;font-size:12px;line-height:12px;color:#000000;right:685px;text-align:right;"><span style="display:inline-block;transform:scaleX(0.936);transform-origin:right">.00</span></div>
<div style="left:918px;top:439px;width:1px;height:20px;background:#A0A0A0"></div>
<div style="left:819px;top:439px;width:99px;height:19px;overflow:hidden"><div class="t" style="left:2px;top:3px;font-size:12px;line-height:12px;color:#000000"><span style="display:inline-block;transform:scaleX(0.91);transform-origin:left">17585536</span></div></div>
<div style="left:1018px;top:439px;width:1px;height:20px;background:#A0A0A0"></div>
<div style="left:919px;top:439px;width:99px;height:19px;overflow:hidden"><div class="t" style="left:2px;top:3px;font-size:12px;line-height:12px;color:#000000"><span style="display:inline-block;transform:scaleX(0.89);transform-origin:left">SEGUNDO ARGE...</span></div></div>
<div style="left:1048px;top:439px;width:1px;height:20px;background:#A0A0A0"></div>
<div style="left:1019px;top:439px;width:29px;height:19px;overflow:hidden"><div class="t" style="left:2px;top:3px;font-size:12px;line-height:12px;color:#000000"><span style="display:inline-block;transform:scaleX(0.9);transform-origin:left">TRN</span></div></div>
<div style="left:1148px;top:439px;width:1px;height:20px;background:#A0A0A0"></div>
<div style="left:1049px;top:439px;width:99px;height:19px;overflow:hidden"><div class="t" style="left:2px;top:3px;font-size:12px;line-height:12px;color:#000000"><span style="display:inline-block;transform:scaleX(0.917);transform-origin:left">2820000.00</span></div></div>
<div style="left:1248px;top:439px;width:1px;height:20px;background:#A0A0A0"></div>
<div style="left:1149px;top:439px;width:99px;height:19px;overflow:hidden"><div class="t" style="left:2px;top:3px;font-size:12px;line-height:12px;color:#000000"><span style="display:inline-block;transform:scaleX(0.925);transform-origin:left">NOMINA DICIE...</span></div></div>
<div style="left:1348px;top:439px;width:1px;height:20px;background:#A0A0A0"></div>
<div style="left:1249px;top:439px;width:99px;height:19px;overflow:hidden"><div class="t" style="left:2px;top:3px;font-size:12px;line-height:12px;color:#000000"><span style="display:inline-block;transform:scaleX(0.943);transform-origin:left">15/01/2019 8:46:...</span></div></div>
<div style="left:1448px;top:439px;width:1px;height:20px;background:#A0A0A0"></div>
<div style="left:1349px;top:439px;width:99px;height:19px;overflow:hidden"><div class="t" style="left:2px;top:3px;font-size:12px;line-height:12px;color:#000000"><span style="display:inline-block;transform:scaleX(0.94);transform-origin:left">GINA</span></div></div>
<div style="left:23px;top:478px;width:1426px;height:1px;background:#A0A0A0"></div>
<div style="left:62px;top:459px;width:1px;height:20px;background:#A0A0A0"></div>
<div style="left:23px;top:459px;width:39px;height:19px;overflow:hidden"><div class="t" style="left:2px;top:3px;font-size:12px;line-height:12px;color:#000000"><span style="display:inline-block;transform:scaleX(0.86);transform-origin:left">CEGR</span></div></div>
<div style="left:118px;top:459px;width:1px;height:20px;background:#A0A0A0"></div>
<div style="left:63px;top:459px;width:55px;height:19px;overflow:hidden"><div class="t" style="left:2px;top:3px;font-size:12px;line-height:12px;color:#000000"><span style="display:inline-block;transform:scaleX(0.91);transform-origin:left">4</span></div></div>
<div style="left:218px;top:459px;width:1px;height:20px;background:#A0A0A0"></div>
<div style="left:119px;top:459px;width:99px;height:19px;overflow:hidden"><div class="t" style="left:2px;top:3px;font-size:12px;line-height:12px;color:#000000"><span style="display:inline-block;transform:scaleX(0.927);transform-origin:left">2019-01-04</span></div></div>
<div style="left:318px;top:459px;width:1px;height:20px;background:#A0A0A0"></div>
<div style="left:219px;top:459px;width:99px;height:19px;overflow:hidden"><div class="t" style="left:2px;top:3px;font-size:12px;line-height:12px;color:#000000"><span style="display:inline-block;transform:scaleX(0.932);transform-origin:left">2.08.01</span></div></div>
<div style="left:418px;top:459px;width:1px;height:20px;background:#A0A0A0"></div>
<div style="left:319px;top:459px;width:99px;height:19px;overflow:hidden"><div class="t" style="left:2px;top:3px;font-size:12px;line-height:12px;color:#000000"><span style="display:inline-block;transform:scaleX(0.974);transform-origin:left">Banco Bbva 342...</span></div></div>
<div style="left:518px;top:459px;width:1px;height:20px;background:#A0A0A0"></div>
<div style="left:419px;top:459px;width:99px;height:19px;overflow:hidden"><div class="t" style="left:2px;top:3px;font-size:12px;line-height:12px;color:#000000"><span style="display:inline-block;transform:scaleX(0.91);transform-origin:left">25050101</span></div></div>
<div style="left:618px;top:459px;width:1px;height:20px;background:#A0A0A0"></div>
<div class="t" style="top:462px;font-size:12px;line-height:12px;color:#000000;left:521px;"><span style="display:inline-block;transform:scaleX(0.989);transform-origin:left">Nomina</span></div>
<div class="t" style="top:462px;font-size:12px;line-height:12px;color:#000000;right:886px;text-align:right;">...</div>
<div style="left:718px;top:459px;width:1px;height:20px;background:#A0A0A0"></div>
<div class="t" style="top:462px;font-size:12px;line-height:12px;color:#000000;right:785px;text-align:right;"><span style="display:inline-block;transform:scaleX(0.929);transform-origin:right">3,740,000.00</span></div>
<div style="left:818px;top:459px;width:1px;height:20px;background:#A0A0A0"></div>
<div class="t" style="top:462px;font-size:12px;line-height:12px;color:#000000;right:685px;text-align:right;"><span style="display:inline-block;transform:scaleX(0.936);transform-origin:right">.00</span></div>
<div style="left:918px;top:459px;width:1px;height:20px;background:#A0A0A0"></div>
<div style="left:819px;top:459px;width:99px;height:19px;overflow:hidden"><div class="t" style="left:2px;top:3px;font-size:12px;line-height:12px;color:#000000"><span style="display:inline-block;transform:scaleX(0.91);transform-origin:left">8001837</span></div></div>
<div style="left:1018px;top:459px;width:1px;height:20px;background:#A0A0A0"></div>
<div style="left:919px;top:459px;width:99px;height:19px;overflow:hidden"><div class="t" style="left:2px;top:3px;font-size:12px;line-height:12px;color:#000000"><span style="display:inline-block;transform:scaleX(0.891);transform-origin:left">ERNESTO  BARB...</span></div></div>
<div style="left:1048px;top:459px;width:1px;height:20px;background:#A0A0A0"></div>
<div style="left:1019px;top:459px;width:29px;height:19px;overflow:hidden"><div class="t" style="left:2px;top:3px;font-size:12px;line-height:12px;color:#000000"><span style="display:inline-block;transform:scaleX(0.9);transform-origin:left">TRN</span></div></div>
<div style="left:1148px;top:459px;width:1px;height:20px;background:#A0A0A0"></div>
<div style="left:1049px;top:459px;width:99px;height:19px;overflow:hidden"><div class="t" style="left:2px;top:3px;font-size:12px;line-height:12px;color:#000000"><span style="display:inline-block;transform:scaleX(0.917);transform-origin:left">3740000.00</span></div></div>
<div style="left:1248px;top:459px;width:1px;height:20px;background:#A0A0A0"></div>
<div style="left:1149px;top:459px;width:99px;height:19px;overflow:hidden"><div class="t" style="left:2px;top:3px;font-size:12px;line-height:12px;color:#000000"><span style="display:inline-block;transform:scaleX(0.925);transform-origin:left">NOMINA DICIE...</span></div></div>
<div style="left:1348px;top:459px;width:1px;height:20px;background:#A0A0A0"></div>
<div style="left:1249px;top:459px;width:99px;height:19px;overflow:hidden"><div class="t" style="left:2px;top:3px;font-size:12px;line-height:12px;color:#000000"><span style="display:inline-block;transform:scaleX(0.943);transform-origin:left">15/01/2019 9:2:3...</span></div></div>
<div style="left:1448px;top:459px;width:1px;height:20px;background:#A0A0A0"></div>
<div style="left:1349px;top:459px;width:99px;height:19px;overflow:hidden"><div class="t" style="left:2px;top:3px;font-size:12px;line-height:12px;color:#000000"><span style="display:inline-block;transform:scaleX(0.94);transform-origin:left">GINA</span></div></div>
<div style="left:23px;top:498px;width:1426px;height:1px;background:#A0A0A0"></div>
<div style="left:62px;top:479px;width:1px;height:20px;background:#A0A0A0"></div>
<div style="left:23px;top:479px;width:39px;height:19px;overflow:hidden"><div class="t" style="left:2px;top:3px;font-size:12px;line-height:12px;color:#000000"><span style="display:inline-block;transform:scaleX(0.86);transform-origin:left">CEGR</span></div></div>
<div style="left:118px;top:479px;width:1px;height:20px;background:#A0A0A0"></div>
<div style="left:63px;top:479px;width:55px;height:19px;overflow:hidden"><div class="t" style="left:2px;top:3px;font-size:12px;line-height:12px;color:#000000"><span style="display:inline-block;transform:scaleX(0.91);transform-origin:left">5</span></div></div>
<div style="left:218px;top:479px;width:1px;height:20px;background:#A0A0A0"></div>
<div style="left:119px;top:479px;width:99px;height:19px;overflow:hidden"><div class="t" style="left:2px;top:3px;font-size:12px;line-height:12px;color:#000000"><span style="display:inline-block;transform:scaleX(0.927);transform-origin:left">2019-01-04</span></div></div>
<div style="left:318px;top:479px;width:1px;height:20px;background:#A0A0A0"></div>
<div style="left:219px;top:479px;width:99px;height:19px;overflow:hidden"><div class="t" style="left:2px;top:3px;font-size:12px;line-height:12px;color:#000000"><span style="display:inline-block;transform:scaleX(0.932);transform-origin:left">2.02.01</span></div></div>
<div style="left:418px;top:479px;width:1px;height:20px;background:#A0A0A0"></div>
<div style="left:319px;top:479px;width:99px;height:19px;overflow:hidden"><div class="t" style="left:2px;top:3px;font-size:12px;line-height:12px;color:#000000"><span style="display:inline-block;transform:scaleX(0.946);transform-origin:left">Cta 320-678-900...</span></div></div>
<div style="left:518px;top:479px;width:1px;height:20px;background:#A0A0A0"></div>
<div style="left:419px;top:479px;width:99px;height:19px;overflow:hidden"><div class="t" style="left:2px;top:3px;font-size:12px;line-height:12px;color:#000000"><span style="display:inline-block;transform:scaleX(0.91);transform-origin:left">25050101</span></div></div>
<div style="left:618px;top:479px;width:1px;height:20px;background:#A0A0A0"></div>
<div class="t" style="top:482px;font-size:12px;line-height:12px;color:#000000;left:521px;"><span style="display:inline-block;transform:scaleX(0.989);transform-origin:left">Nomina</span></div>
<div class="t" style="top:482px;font-size:12px;line-height:12px;color:#000000;right:886px;text-align:right;">...</div>
<div style="left:718px;top:479px;width:1px;height:20px;background:#A0A0A0"></div>
<div class="t" style="top:482px;font-size:12px;line-height:12px;color:#000000;right:785px;text-align:right;"><span style="display:inline-block;transform:scaleX(0.924);transform-origin:right">315,391.00</span></div>
<div style="left:818px;top:479px;width:1px;height:20px;background:#A0A0A0"></div>
<div class="t" style="top:482px;font-size:12px;line-height:12px;color:#000000;right:685px;text-align:right;"><span style="display:inline-block;transform:scaleX(0.936);transform-origin:right">.00</span></div>
<div style="left:918px;top:479px;width:1px;height:20px;background:#A0A0A0"></div>
<div style="left:819px;top:479px;width:99px;height:19px;overflow:hidden"><div class="t" style="left:2px;top:3px;font-size:12px;line-height:12px;color:#000000"><span style="display:inline-block;transform:scaleX(0.91);transform-origin:left">63531526</span></div></div>
<div style="left:1018px;top:479px;width:1px;height:20px;background:#A0A0A0"></div>
<div style="left:919px;top:479px;width:99px;height:19px;overflow:hidden"><div class="t" style="left:2px;top:3px;font-size:12px;line-height:12px;color:#000000"><span style="display:inline-block;transform:scaleX(0.924);transform-origin:left">MAGDA YURAN...</span></div></div>
<div style="left:1048px;top:479px;width:1px;height:20px;background:#A0A0A0"></div>
<div style="left:1019px;top:479px;width:29px;height:19px;overflow:hidden"><div class="t" style="left:2px;top:3px;font-size:12px;line-height:12px;color:#000000"><span style="display:inline-block;transform:scaleX(0.9);transform-origin:left">TRN</span></div></div>
<div style="left:1148px;top:479px;width:1px;height:20px;background:#A0A0A0"></div>
<div style="left:1049px;top:479px;width:99px;height:19px;overflow:hidden"><div class="t" style="left:2px;top:3px;font-size:12px;line-height:12px;color:#000000"><span style="display:inline-block;transform:scaleX(0.918);transform-origin:left">320729.00</span></div></div>
<div style="left:1248px;top:479px;width:1px;height:20px;background:#A0A0A0"></div>
<div style="left:1149px;top:479px;width:99px;height:19px;overflow:hidden"><div class="t" style="left:2px;top:3px;font-size:12px;line-height:12px;color:#000000"><span style="display:inline-block;transform:scaleX(0.925);transform-origin:left">NOMINA DICIE...</span></div></div>
<div style="left:1348px;top:479px;width:1px;height:20px;background:#A0A0A0"></div>
<div style="left:1249px;top:479px;width:99px;height:19px;overflow:hidden"><div class="t" style="left:2px;top:3px;font-size:12px;line-height:12px;color:#000000"><span style="display:inline-block;transform:scaleX(0.943);transform-origin:left">15/01/2019 9:9:2...</span></div></div>
<div style="left:1448px;top:479px;width:1px;height:20px;background:#A0A0A0"></div>
<div style="left:1349px;top:479px;width:99px;height:19px;overflow:hidden"><div class="t" style="left:2px;top:3px;font-size:12px;line-height:12px;color:#000000"><span style="display:inline-block;transform:scaleX(0.94);transform-origin:left">GINA</span></div></div>
<div style="left:23px;top:518px;width:1426px;height:1px;background:#A0A0A0"></div>
<div style="left:62px;top:499px;width:1px;height:20px;background:#A0A0A0"></div>
<div style="left:23px;top:499px;width:39px;height:19px;overflow:hidden"><div class="t" style="left:2px;top:3px;font-size:12px;line-height:12px;color:#000000"><span style="display:inline-block;transform:scaleX(0.86);transform-origin:left">CEGR</span></div></div>
<div style="left:118px;top:499px;width:1px;height:20px;background:#A0A0A0"></div>
<div style="left:63px;top:499px;width:55px;height:19px;overflow:hidden"><div class="t" style="left:2px;top:3px;font-size:12px;line-height:12px;color:#000000"><span style="display:inline-block;transform:scaleX(0.91);transform-origin:left">5</span></div></div>
<div style="left:218px;top:499px;width:1px;height:20px;background:#A0A0A0"></div>
<div style="left:119px;top:499px;width:99px;height:19px;overflow:hidden"><div class="t" style="left:2px;top:3px;font-size:12px;line-height:12px;color:#000000"><span style="display:inline-block;transform:scaleX(0.927);transform-origin:left">2019-01-04</span></div></div>
<div style="left:318px;top:499px;width:1px;height:20px;background:#A0A0A0"></div>
<div style="left:219px;top:499px;width:99px;height:19px;overflow:hidden"><div class="t" style="left:2px;top:3px;font-size:12px;line-height:12px;color:#000000"><span style="display:inline-block;transform:scaleX(0.932);transform-origin:left">2.02.01</span></div></div>
<div style="left:418px;top:499px;width:1px;height:20px;background:#A0A0A0"></div>
<div style="left:319px;top:499px;width:99px;height:19px;overflow:hidden"><div class="t" style="left:2px;top:3px;font-size:12px;line-height:12px;color:#000000"><span style="display:inline-block;transform:scaleX(0.946);transform-origin:left">Cta 320-678-900...</span></div></div>
<div style="left:518px;top:499px;width:1px;height:20px;background:#A0A0A0"></div>
<div style="left:419px;top:499px;width:99px;height:19px;overflow:hidden"><div class="t" style="left:2px;top:3px;font-size:12px;line-height:12px;color:#000000"><span style="display:inline-block;transform:scaleX(0.91);transform-origin:left">52111905</span></div></div>
<div style="left:618px;top:499px;width:1px;height:20px;background:#A0A0A0"></div>
<div class="t" style="top:502px;font-size:12px;line-height:12px;color:#000000;left:521px;"><span style="display:inline-block;transform:scaleX(0.978);transform-origin:left">Ajuste Al Peso</span></div>
<div class="t" style="top:502px;font-size:12px;line-height:12px;color:#000000;right:886px;text-align:right;">...</div>
<div style="left:718px;top:499px;width:1px;height:20px;background:#A0A0A0"></div>
<div class="t" style="top:502px;font-size:12px;line-height:12px;color:#000000;right:785px;text-align:right;"><span style="display:inline-block;transform:scaleX(0.929);transform-origin:right">5,338.00</span></div>
<div style="left:818px;top:499px;width:1px;height:20px;background:#A0A0A0"></div>
<div class="t" style="top:502px;font-size:12px;line-height:12px;color:#000000;right:685px;text-align:right;"><span style="display:inline-block;transform:scaleX(0.936);transform-origin:right">.00</span></div>
<div style="left:918px;top:499px;width:1px;height:20px;background:#A0A0A0"></div>
<div style="left:819px;top:499px;width:99px;height:19px;overflow:hidden"><div class="t" style="left:2px;top:3px;font-size:12px;line-height:12px;color:#000000"><span style="display:inline-block;transform:scaleX(0.91);transform-origin:left">63531526</span></div></div>
<div style="left:1018px;top:499px;width:1px;height:20px;background:#A0A0A0"></div>
<div style="left:919px;top:499px;width:99px;height:19px;overflow:hidden"><div class="t" style="left:2px;top:3px;font-size:12px;line-height:12px;color:#000000"><span style="display:inline-block;transform:scaleX(0.924);transform-origin:left">MAGDA YURAN...</span></div></div>
<div style="left:1048px;top:499px;width:1px;height:20px;background:#A0A0A0"></div>
<div style="left:1019px;top:499px;width:29px;height:19px;overflow:hidden"><div class="t" style="left:2px;top:3px;font-size:12px;line-height:12px;color:#000000"><span style="display:inline-block;transform:scaleX(0.9);transform-origin:left">TRN</span></div></div>
<div style="left:1148px;top:499px;width:1px;height:20px;background:#A0A0A0"></div>
<div style="left:1049px;top:499px;width:99px;height:19px;overflow:hidden"><div class="t" style="left:2px;top:3px;font-size:12px;line-height:12px;color:#000000"><span style="display:inline-block;transform:scaleX(0.918);transform-origin:left">320729.00</span></div></div>
<div style="left:1248px;top:499px;width:1px;height:20px;background:#A0A0A0"></div>
<div style="left:1149px;top:499px;width:99px;height:19px;overflow:hidden"><div class="t" style="left:2px;top:3px;font-size:12px;line-height:12px;color:#000000"><span style="display:inline-block;transform:scaleX(0.925);transform-origin:left">NOMINA DICIE...</span></div></div>
<div style="left:1348px;top:499px;width:1px;height:20px;background:#A0A0A0"></div>
<div style="left:1249px;top:499px;width:99px;height:19px;overflow:hidden"><div class="t" style="left:2px;top:3px;font-size:12px;line-height:12px;color:#000000"><span style="display:inline-block;transform:scaleX(0.943);transform-origin:left">15/01/2019 9:9:2...</span></div></div>
<div style="left:1448px;top:499px;width:1px;height:20px;background:#A0A0A0"></div>
<div style="left:1349px;top:499px;width:99px;height:19px;overflow:hidden"><div class="t" style="left:2px;top:3px;font-size:12px;line-height:12px;color:#000000"><span style="display:inline-block;transform:scaleX(0.94);transform-origin:left">GINA</span></div></div>
<div style="left:23px;top:538px;width:1426px;height:1px;background:#A0A0A0"></div>
<div style="left:62px;top:519px;width:1px;height:20px;background:#A0A0A0"></div>
<div style="left:23px;top:519px;width:39px;height:19px;overflow:hidden"><div class="t" style="left:2px;top:3px;font-size:12px;line-height:12px;color:#000000"><span style="display:inline-block;transform:scaleX(0.86);transform-origin:left">CEGR</span></div></div>
<div style="left:118px;top:519px;width:1px;height:20px;background:#A0A0A0"></div>
<div style="left:63px;top:519px;width:55px;height:19px;overflow:hidden"><div class="t" style="left:2px;top:3px;font-size:12px;line-height:12px;color:#000000"><span style="display:inline-block;transform:scaleX(0.91);transform-origin:left">9</span></div></div>
<div style="left:218px;top:519px;width:1px;height:20px;background:#A0A0A0"></div>
<div style="left:119px;top:519px;width:99px;height:19px;overflow:hidden"><div class="t" style="left:2px;top:3px;font-size:12px;line-height:12px;color:#000000"><span style="display:inline-block;transform:scaleX(0.927);transform-origin:left">2019-01-04</span></div></div>
<div style="left:318px;top:519px;width:1px;height:20px;background:#A0A0A0"></div>
<div style="left:219px;top:519px;width:99px;height:19px;overflow:hidden"><div class="t" style="left:2px;top:3px;font-size:12px;line-height:12px;color:#000000"><span style="display:inline-block;transform:scaleX(0.932);transform-origin:left">2.02.01</span></div></div>
<div style="left:418px;top:519px;width:1px;height:20px;background:#A0A0A0"></div>
<div style="left:319px;top:519px;width:99px;height:19px;overflow:hidden"><div class="t" style="left:2px;top:3px;font-size:12px;line-height:12px;color:#000000"><span style="display:inline-block;transform:scaleX(0.946);transform-origin:left">Cta 320-678-900...</span></div></div>
<div style="left:518px;top:519px;width:1px;height:20px;background:#A0A0A0"></div>
<div style="left:419px;top:519px;width:99px;height:19px;overflow:hidden"><div class="t" style="left:2px;top:3px;font-size:12px;line-height:12px;color:#000000"><span style="display:inline-block;transform:scaleX(0.91);transform-origin:left">51110604</span></div></div>
<div style="left:618px;top:519px;width:1px;height:20px;background:#A0A0A0"></div>
<div style="left:519px;top:519px;width:99px;height:19px;overflow:hidden"><div class="t" style="left:2px;top:3px;font-size:12px;line-height:12px;color:#000000"><span style="display:inline-block;transform:scaleX(0.952);transform-origin:left">Flota Y Equipo D...</span></div></div>
<div style="left:718px;top:519px;width:1px;height:20px;background:#A0A0A0"></div>
<div class="t" style="top:522px;font-size:12px;line-height:12px;color:#000000;right:785px;text-align:right;"><span style="display:inline-block;transform:scaleX(0.924);transform-origin:right">922,000.00</span></div>
<div style="left:818px;top:519px;width:1px;height:20px;background:#A0A0A0"></div>
<div class="t" style="top:522px;font-size:12px;line-height:12px;color:#000000;right:685px;text-align:right;"><span style="display:inline-block;transform:scaleX(0.936);transform-origin:right">.00</span></div>
<div style="left:918px;top:519px;width:1px;height:20px;background:#A0A0A0"></div>
<div style="left:819px;top:519px;width:99px;height:19px;overflow:hidden"><div class="t" style="left:2px;top:3px;font-size:12px;line-height:12px;color:#000000"><span style="display:inline-block;transform:scaleX(0.91);transform-origin:left">860026182</span></div></div>
<div style="left:1018px;top:519px;width:1px;height:20px;background:#A0A0A0"></div>
<div style="left:919px;top:519px;width:99px;height:19px;overflow:hidden"><div class="t" style="left:2px;top:3px;font-size:12px;line-height:12px;color:#000000"><span style="display:inline-block;transform:scaleX(0.912);transform-origin:left">ALLIANZ SEGUR...</span></div></div>
<div style="left:1048px;top:519px;width:1px;height:20px;background:#A0A0A0"></div>
<div style="left:1019px;top:519px;width:29px;height:19px;overflow:hidden"><div class="t" style="left:2px;top:3px;font-size:12px;line-height:12px;color:#000000"><span style="display:inline-block;transform:scaleX(0.9);transform-origin:left">TRN</span></div></div>
<div style="left:1148px;top:519px;width:1px;height:20px;background:#A0A0A0"></div>
<div style="left:1049px;top:519px;width:99px;height:19px;overflow:hidden"><div class="t" style="left:2px;top:3px;font-size:12px;line-height:12px;color:#000000"><span style="display:inline-block;transform:scaleX(0.917);transform-origin:left">1097180.00</span></div></div>
<div style="left:1248px;top:519px;width:1px;height:20px;background:#A0A0A0"></div>
<div style="left:1149px;top:519px;width:99px;height:19px;overflow:hidden"><div class="t" style="left:2px;top:3px;font-size:12px;line-height:12px;color:#000000"><span style="display:inline-block;transform:scaleX(0.926);transform-origin:left">POLIZA TODO R...</span></div></div>
<div style="left:1348px;top:519px;width:1px;height:20px;background:#A0A0A0"></div>
<div style="left:1249px;top:519px;width:99px;height:19px;overflow:hidden"><div class="t" style="left:2px;top:3px;font-size:12px;line-height:12px;color:#000000"><span style="display:inline-block;transform:scaleX(0.94);transform-origin:left">15/01/2019 12:3...</span></div></div>
<div style="left:1448px;top:519px;width:1px;height:20px;background:#A0A0A0"></div>
<div style="left:1349px;top:519px;width:99px;height:19px;overflow:hidden"><div class="t" style="left:2px;top:3px;font-size:12px;line-height:12px;color:#000000"><span style="display:inline-block;transform:scaleX(0.94);transform-origin:left">GINA</span></div></div>
<div style="left:23px;top:558px;width:1426px;height:1px;background:#A0A0A0"></div>
<div style="left:62px;top:539px;width:1px;height:20px;background:#A0A0A0"></div>
<div style="left:23px;top:539px;width:39px;height:19px;overflow:hidden"><div class="t" style="left:2px;top:3px;font-size:12px;line-height:12px;color:#000000"><span style="display:inline-block;transform:scaleX(0.86);transform-origin:left">CEGR</span></div></div>
<div style="left:118px;top:539px;width:1px;height:20px;background:#A0A0A0"></div>
<div style="left:63px;top:539px;width:55px;height:19px;overflow:hidden"><div class="t" style="left:2px;top:3px;font-size:12px;line-height:12px;color:#000000"><span style="display:inline-block;transform:scaleX(0.91);transform-origin:left">9</span></div></div>
<div style="left:218px;top:539px;width:1px;height:20px;background:#A0A0A0"></div>
<div style="left:119px;top:539px;width:99px;height:19px;overflow:hidden"><div class="t" style="left:2px;top:3px;font-size:12px;line-height:12px;color:#000000"><span style="display:inline-block;transform:scaleX(0.927);transform-origin:left">2019-01-04</span></div></div>
<div style="left:318px;top:539px;width:1px;height:20px;background:#A0A0A0"></div>
<div style="left:219px;top:539px;width:99px;height:19px;overflow:hidden"><div class="t" style="left:2px;top:3px;font-size:12px;line-height:12px;color:#000000"><span style="display:inline-block;transform:scaleX(0.932);transform-origin:left">2.02.01</span></div></div>
<div style="left:418px;top:539px;width:1px;height:20px;background:#A0A0A0"></div>
<div style="left:319px;top:539px;width:99px;height:19px;overflow:hidden"><div class="t" style="left:2px;top:3px;font-size:12px;line-height:12px;color:#000000"><span style="display:inline-block;transform:scaleX(0.946);transform-origin:left">Cta 320-678-900...</span></div></div>
<div style="left:518px;top:539px;width:1px;height:20px;background:#A0A0A0"></div>
<div style="left:419px;top:539px;width:99px;height:19px;overflow:hidden"><div class="t" style="left:2px;top:3px;font-size:12px;line-height:12px;color:#000000"><span style="display:inline-block;transform:scaleX(0.91);transform-origin:left">510809</span></div></div>
<div style="left:618px;top:539px;width:1px;height:20px;background:#A0A0A0"></div>
<div style="left:519px;top:539px;width:99px;height:19px;overflow:hidden"><div class="t" style="left:2px;top:3px;font-size:12px;line-height:12px;color:#000000"><span style="display:inline-block;transform:scaleX(0.961);transform-origin:left">Iva Descontable ...</span></div></div>
<div style="left:718px;top:539px;width:1px;height:20px;background:#A0A0A0"></div>
<div class="t" style="top:542px;font-size:12px;line-height:12px;color:#000000;right:785px;text-align:right;"><span style="display:inline-block;transform:scaleX(0.924);transform-origin:right">175,180.00</span></div>
<div style="left:818px;top:539px;width:1px;height:20px;background:#A0A0A0"></div>
<div class="t" style="top:542px;font-size:12px;line-height:12px;color:#000000;right:685px;text-align:right;"><span style="display:inline-block;transform:scaleX(0.936);transform-origin:right">.00</span></div>
<div style="left:918px;top:539px;width:1px;height:20px;background:#A0A0A0"></div>
<div style="left:819px;top:539px;width:99px;height:19px;overflow:hidden"><div class="t" style="left:2px;top:3px;font-size:12px;line-height:12px;color:#000000"><span style="display:inline-block;transform:scaleX(0.91);transform-origin:left">860026182</span></div></div>
<div style="left:1018px;top:539px;width:1px;height:20px;background:#A0A0A0"></div>
<div style="left:919px;top:539px;width:99px;height:19px;overflow:hidden"><div class="t" style="left:2px;top:3px;font-size:12px;line-height:12px;color:#000000"><span style="display:inline-block;transform:scaleX(0.912);transform-origin:left">ALLIANZ SEGUR...</span></div></div>
<div style="left:1048px;top:539px;width:1px;height:20px;background:#A0A0A0"></div>
<div style="left:1019px;top:539px;width:29px;height:19px;overflow:hidden"><div class="t" style="left:2px;top:3px;font-size:12px;line-height:12px;color:#000000"><span style="display:inline-block;transform:scaleX(0.9);transform-origin:left">TRN</span></div></div>
<div style="left:1148px;top:539px;width:1px;height:20px;background:#A0A0A0"></div>
<div style="left:1049px;top:539px;width:99px;height:19px;overflow:hidden"><div class="t" style="left:2px;top:3px;font-size:12px;line-height:12px;color:#000000"><span style="display:inline-block;transform:scaleX(0.917);transform-origin:left">1097180.00</span></div></div>
<div style="left:1248px;top:539px;width:1px;height:20px;background:#A0A0A0"></div>
<div style="left:1149px;top:539px;width:99px;height:19px;overflow:hidden"><div class="t" style="left:2px;top:3px;font-size:12px;line-height:12px;color:#000000"><span style="display:inline-block;transform:scaleX(0.926);transform-origin:left">POLIZA TODO R...</span></div></div>
<div style="left:1348px;top:539px;width:1px;height:20px;background:#A0A0A0"></div>
<div style="left:1249px;top:539px;width:99px;height:19px;overflow:hidden"><div class="t" style="left:2px;top:3px;font-size:12px;line-height:12px;color:#000000"><span style="display:inline-block;transform:scaleX(0.94);transform-origin:left">15/01/2019 12:3...</span></div></div>
<div style="left:1448px;top:539px;width:1px;height:20px;background:#A0A0A0"></div>
<div style="left:1349px;top:539px;width:99px;height:19px;overflow:hidden"><div class="t" style="left:2px;top:3px;font-size:12px;line-height:12px;color:#000000"><span style="display:inline-block;transform:scaleX(0.94);transform-origin:left">GINA</span></div></div>
<div style="left:23px;top:578px;width:1426px;height:1px;background:#A0A0A0"></div>
<div style="left:62px;top:559px;width:1px;height:20px;background:#A0A0A0"></div>
<div style="left:23px;top:559px;width:39px;height:19px;overflow:hidden"><div class="t" style="left:2px;top:3px;font-size:12px;line-height:12px;color:#000000"><span style="display:inline-block;transform:scaleX(0.86);transform-origin:left">CEGR</span></div></div>
<div style="left:118px;top:559px;width:1px;height:20px;background:#A0A0A0"></div>
<div style="left:63px;top:559px;width:55px;height:19px;overflow:hidden"><div class="t" style="left:2px;top:3px;font-size:12px;line-height:12px;color:#000000"><span style="display:inline-block;transform:scaleX(0.91);transform-origin:left">10</span></div></div>
<div style="left:218px;top:559px;width:1px;height:20px;background:#A0A0A0"></div>
<div style="left:119px;top:559px;width:99px;height:19px;overflow:hidden"><div class="t" style="left:2px;top:3px;font-size:12px;line-height:12px;color:#000000"><span style="display:inline-block;transform:scaleX(0.927);transform-origin:left">2019-01-04</span></div></div>
<div style="left:318px;top:559px;width:1px;height:20px;background:#A0A0A0"></div>
<div style="left:219px;top:559px;width:99px;height:19px;overflow:hidden"><div class="t" style="left:2px;top:3px;font-size:12px;line-height:12px;color:#000000"><span style="display:inline-block;transform:scaleX(0.932);transform-origin:left">2.02.01</span></div></div>
<div style="left:418px;top:559px;width:1px;height:20px;background:#A0A0A0"></div>
<div style="left:319px;top:559px;width:99px;height:19px;overflow:hidden"><div class="t" style="left:2px;top:3px;font-size:12px;line-height:12px;color:#000000"><span style="display:inline-block;transform:scaleX(0.946);transform-origin:left">Cta 320-678-900...</span></div></div>
<div style="left:518px;top:559px;width:1px;height:20px;background:#A0A0A0"></div>
<div style="left:419px;top:559px;width:99px;height:19px;overflow:hidden"><div class="t" style="left:2px;top:3px;font-size:12px;line-height:12px;color:#000000"><span style="display:inline-block;transform:scaleX(0.91);transform-origin:left">132019</span></div></div>
<div style="left:618px;top:559px;width:1px;height:20px;background:#A0A0A0"></div>
<div style="left:519px;top:559px;width:99px;height:19px;overflow:hidden"><div class="t" style="left:2px;top:3px;font-size:12px;line-height:12px;color:#000000"><span style="display:inline-block;transform:scaleX(0.986);transform-origin:left">Anticipo A Prov...</span></div></div>
<div style="left:718px;top:559px;width:1px;height:20px;background:#A0A0A0"></div>
<div class="t" style="top:562px;font-size:12px;line-height:12px;color:#000000;right:785px;text-align:right;"><span style="display:inline-block;transform:scaleX(0.929);transform-origin:right">5,000,000.00</span></div>
<div style="left:818px;top:559px;width:1px;height:20px;background:#A0A0A0"></div>
<div class="t" style="top:562px;font-size:12px;line-height:12px;color:#000000;right:685px;text-align:right;"><span style="display:inline-block;transform:scaleX(0.936);transform-origin:right">.00</span></div>
<div style="left:918px;top:559px;width:1px;height:20px;background:#A0A0A0"></div>
<div style="left:819px;top:559px;width:99px;height:19px;overflow:hidden"><div class="t" style="left:2px;top:3px;font-size:12px;line-height:12px;color:#000000"><span style="display:inline-block;transform:scaleX(0.91);transform-origin:left">900323686</span></div></div>
<div style="left:1018px;top:559px;width:1px;height:20px;background:#A0A0A0"></div>
<div style="left:919px;top:559px;width:99px;height:19px;overflow:hidden"><div class="t" style="left:2px;top:3px;font-size:12px;line-height:12px;color:#000000"><span style="display:inline-block;transform:scaleX(0.924);transform-origin:left">CALVO ASOCIA...</span></div></div>
<div style="left:1048px;top:559px;width:1px;height:20px;background:#A0A0A0"></div>
<div style="left:1019px;top:559px;width:29px;height:19px;overflow:hidden"><div class="t" style="left:2px;top:3px;font-size:12px;line-height:12px;color:#000000"><span style="display:inline-block;transform:scaleX(0.9);transform-origin:left">TRN</span></div></div>
<div style="left:1148px;top:559px;width:1px;height:20px;background:#A0A0A0"></div>
<div style="left:1049px;top:559px;width:99px;height:19px;overflow:hidden"><div class="t" style="left:2px;top:3px;font-size:12px;line-height:12px;color:#000000"><span style="display:inline-block;transform:scaleX(0.917);transform-origin:left">5000000.00</span></div></div>
<div style="left:1248px;top:559px;width:1px;height:20px;background:#A0A0A0"></div>
<div style="left:1149px;top:559px;width:99px;height:19px;overflow:hidden"><div class="t" style="left:2px;top:3px;font-size:12px;line-height:12px;color:#000000"><span style="display:inline-block;transform:scaleX(0.924);transform-origin:left">ANTICIPO MAQ...</span></div></div>
<div style="left:1348px;top:559px;width:1px;height:20px;background:#A0A0A0"></div>
<div style="left:1249px;top:559px;width:99px;height:19px;overflow:hidden"><div class="t" style="left:2px;top:3px;font-size:12px;line-height:12px;color:#000000"><span style="display:inline-block;transform:scaleX(0.943);transform-origin:left">16/01/2019 9:18:...</span></div></div>
<div style="left:1448px;top:559px;width:1px;height:20px;background:#A0A0A0"></div>
<div style="left:1349px;top:559px;width:99px;height:19px;overflow:hidden"><div class="t" style="left:2px;top:3px;font-size:12px;line-height:12px;color:#000000"><span style="display:inline-block;transform:scaleX(0.94);transform-origin:left">GINA</span></div></div>
<div style="left:23px;top:598px;width:1426px;height:1px;background:#A0A0A0"></div>
<div style="left:62px;top:579px;width:1px;height:20px;background:#A0A0A0"></div>
<div style="left:23px;top:579px;width:39px;height:19px;overflow:hidden"><div class="t" style="left:2px;top:3px;font-size:12px;line-height:12px;color:#000000"><span style="display:inline-block;transform:scaleX(0.86);transform-origin:left">CEGR</span></div></div>
<div style="left:118px;top:579px;width:1px;height:20px;background:#A0A0A0"></div>
<div style="left:63px;top:579px;width:55px;height:19px;overflow:hidden"><div class="t" style="left:2px;top:3px;font-size:12px;line-height:12px;color:#000000"><span style="display:inline-block;transform:scaleX(0.91);transform-origin:left">11</span></div></div>
<div style="left:218px;top:579px;width:1px;height:20px;background:#A0A0A0"></div>
<div style="left:119px;top:579px;width:99px;height:19px;overflow:hidden"><div class="t" style="left:2px;top:3px;font-size:12px;line-height:12px;color:#000000"><span style="display:inline-block;transform:scaleX(0.927);transform-origin:left">2019-01-04</span></div></div>
<div style="left:318px;top:579px;width:1px;height:20px;background:#A0A0A0"></div>
<div style="left:219px;top:579px;width:99px;height:19px;overflow:hidden"><div class="t" style="left:2px;top:3px;font-size:12px;line-height:12px;color:#000000"><span style="display:inline-block;transform:scaleX(0.932);transform-origin:left">2.02.01</span></div></div>
<div style="left:418px;top:579px;width:1px;height:20px;background:#A0A0A0"></div>
<div style="left:319px;top:579px;width:99px;height:19px;overflow:hidden"><div class="t" style="left:2px;top:3px;font-size:12px;line-height:12px;color:#000000"><span style="display:inline-block;transform:scaleX(0.946);transform-origin:left">Cta 320-678-900...</span></div></div>
<div style="left:518px;top:579px;width:1px;height:20px;background:#A0A0A0"></div>
<div style="left:419px;top:579px;width:99px;height:19px;overflow:hidden"><div class="t" style="left:2px;top:3px;font-size:12px;line-height:12px;color:#000000"><span style="display:inline-block;transform:scaleX(0.91);transform-origin:left">132020</span></div></div>
<div style="left:618px;top:579px;width:1px;height:20px;background:#A0A0A0"></div>
<div style="left:519px;top:579px;width:99px;height:19px;overflow:hidden"><div class="t" style="left:2px;top:3px;font-size:12px;line-height:12px;color:#000000"><span style="display:inline-block;transform:scaleX(0.987);transform-origin:left">Anticipo A Trab...</span></div></div>
<div style="left:718px;top:579px;width:1px;height:20px;background:#A0A0A0"></div>
<div class="t" style="top:582px;font-size:12px;line-height:12px;color:#000000;right:785px;text-align:right;"><span style="display:inline-block;transform:scaleX(0.924);transform-origin:right">400,000.00</span></div>
<div style="left:818px;top:579px;width:1px;height:20px;background:#A0A0A0"></div>
<div class="t" style="top:582px;font-size:12px;line-height:12px;color:#000000;right:685px;text-align:right;"><span style="display:inline-block;transform:scaleX(0.936);transform-origin:right">.00</span></div>
<div style="left:918px;top:579px;width:1px;height:20px;background:#A0A0A0"></div>
<div style="left:819px;top:579px;width:99px;height:19px;overflow:hidden"><div class="t" style="left:2px;top:3px;font-size:12px;line-height:12px;color:#000000"><span style="display:inline-block;transform:scaleX(0.91);transform-origin:left">8001837</span></div></div>
<div style="left:1018px;top:579px;width:1px;height:20px;background:#A0A0A0"></div>
<div style="left:919px;top:579px;width:99px;height:19px;overflow:hidden"><div class="t" style="left:2px;top:3px;font-size:12px;line-height:12px;color:#000000"><span style="display:inline-block;transform:scaleX(0.891);transform-origin:left">ERNESTO  BARB...</span></div></div>
<div style="left:1048px;top:579px;width:1px;height:20px;background:#A0A0A0"></div>
<div style="left:1019px;top:579px;width:29px;height:19px;overflow:hidden"><div class="t" style="left:2px;top:3px;font-size:12px;line-height:12px;color:#000000"><span style="display:inline-block;transform:scaleX(0.9);transform-origin:left">TRN</span></div></div>
<div style="left:1148px;top:579px;width:1px;height:20px;background:#A0A0A0"></div>
<div style="left:1049px;top:579px;width:99px;height:19px;overflow:hidden"><div class="t" style="left:2px;top:3px;font-size:12px;line-height:12px;color:#000000"><span style="display:inline-block;transform:scaleX(0.918);transform-origin:left">400000.00</span></div></div>
<div style="left:1248px;top:579px;width:1px;height:20px;background:#A0A0A0"></div>
<div style="left:1149px;top:579px;width:99px;height:19px;overflow:hidden"><div class="t" style="left:2px;top:3px;font-size:12px;line-height:12px;color:#000000"><span style="display:inline-block;transform:scaleX(0.888);transform-origin:left">GASTOS VARIOS...</span></div></div>
<div style="left:1348px;top:579px;width:1px;height:20px;background:#A0A0A0"></div>
<div style="left:1249px;top:579px;width:99px;height:19px;overflow:hidden"><div class="t" style="left:2px;top:3px;font-size:12px;line-height:12px;color:#000000"><span style="display:inline-block;transform:scaleX(0.943);transform-origin:left">16/01/2019 9:45:...</span></div></div>
<div style="left:1448px;top:579px;width:1px;height:20px;background:#A0A0A0"></div>
<div style="left:1349px;top:579px;width:99px;height:19px;overflow:hidden"><div class="t" style="left:2px;top:3px;font-size:12px;line-height:12px;color:#000000"><span style="display:inline-block;transform:scaleX(0.94);transform-origin:left">GINA</span></div></div>
<div style="left:23px;top:618px;width:1426px;height:1px;background:#A0A0A0"></div>
<div style="left:62px;top:599px;width:1px;height:20px;background:#A0A0A0"></div>
<div style="left:23px;top:599px;width:39px;height:19px;overflow:hidden"><div class="t" style="left:2px;top:3px;font-size:12px;line-height:12px;color:#000000"><span style="display:inline-block;transform:scaleX(0.86);transform-origin:left">CEGR</span></div></div>
<div style="left:118px;top:599px;width:1px;height:20px;background:#A0A0A0"></div>
<div style="left:63px;top:599px;width:55px;height:19px;overflow:hidden"><div class="t" style="left:2px;top:3px;font-size:12px;line-height:12px;color:#000000"><span style="display:inline-block;transform:scaleX(0.91);transform-origin:left">12</span></div></div>
<div style="left:218px;top:599px;width:1px;height:20px;background:#A0A0A0"></div>
<div style="left:119px;top:599px;width:99px;height:19px;overflow:hidden"><div class="t" style="left:2px;top:3px;font-size:12px;line-height:12px;color:#000000"><span style="display:inline-block;transform:scaleX(0.927);transform-origin:left">2019-01-04</span></div></div>
<div style="left:318px;top:599px;width:1px;height:20px;background:#A0A0A0"></div>
<div style="left:219px;top:599px;width:99px;height:19px;overflow:hidden"><div class="t" style="left:2px;top:3px;font-size:12px;line-height:12px;color:#000000"><span style="display:inline-block;transform:scaleX(0.932);transform-origin:left">2.08.01</span></div></div>
<div style="left:418px;top:599px;width:1px;height:20px;background:#A0A0A0"></div>
<div style="left:319px;top:599px;width:99px;height:19px;overflow:hidden"><div class="t" style="left:2px;top:3px;font-size:12px;line-height:12px;color:#000000"><span style="display:inline-block;transform:scaleX(0.974);transform-origin:left">Banco Bbva 342...</span></div></div>
<div style="left:518px;top:599px;width:1px;height:20px;background:#A0A0A0"></div>
<div style="left:419px;top:599px;width:99px;height:19px;overflow:hidden"><div class="t" style="left:2px;top:3px;font-size:12px;line-height:12px;color:#000000"><span style="display:inline-block;transform:scaleX(0.91);transform-origin:left">25050101</span></div></div>
<div style="left:618px;top:599px;width:1px;height:20px;background:#A0A0A0"></div>
<div class="t" style="top:602px;font-size:12px;line-height:12px;color:#000000;left:521px;"><span style="display:inline-block;transform:scaleX(0.989);transform-origin:left">Nomina</span></div>
<div class="t" style="top:602px;font-size:12px;line-height:12px;color:#000000;right:886px;text-align:right;">...</div>
<div style="left:718px;top:599px;width:1px;height:20px;background:#A0A0A0"></div>
<div class="t" style="top:602px;font-size:12px;line-height:12px;color:#000000;right:785px;text-align:right;"><span style="display:inline-block;transform:scaleX(0.924);transform-origin:right">148,828.00</span></div>
<div style="left:818px;top:599px;width:1px;height:20px;background:#A0A0A0"></div>
<div class="t" style="top:602px;font-size:12px;line-height:12px;color:#000000;right:685px;text-align:right;"><span style="display:inline-block;transform:scaleX(0.936);transform-origin:right">.00</span></div>
<div style="left:918px;top:599px;width:1px;height:20px;background:#A0A0A0"></div>
<div style="left:819px;top:599px;width:99px;height:19px;overflow:hidden"><div class="t" style="left:2px;top:3px;font-size:12px;line-height:12px;color:#000000"><span style="display:inline-block;transform:scaleX(0.91);transform-origin:left">91541813</span></div></div>
<div style="left:1018px;top:599px;width:1px;height:20px;background:#A0A0A0"></div>
<div style="left:919px;top:599px;width:99px;height:19px;overflow:hidden"><div class="t" style="left:2px;top:3px;font-size:12px;line-height:12px;color:#000000"><span style="display:inline-block;transform:scaleX(0.929);transform-origin:left">EDWIN  PAVA DI...</span></div></div>
<div style="left:1048px;top:599px;width:1px;height:20px;background:#A0A0A0"></div>
<div style="left:1019px;top:599px;width:29px;height:19px;overflow:hidden"><div class="t" style="left:2px;top:3px;font-size:12px;line-height:12px;color:#000000"><span style="display:inline-block;transform:scaleX(0.9);transform-origin:left">TRN</span></div></div>
<div style="left:1148px;top:599px;width:1px;height:20px;background:#A0A0A0"></div>
<div style="left:1049px;top:599px;width:99px;height:19px;overflow:hidden"><div class="t" style="left:2px;top:3px;font-size:12px;line-height:12px;color:#000000"><span style="display:inline-block;transform:scaleX(0.918);transform-origin:left">148828.00</span></div></div>
<div style="left:1248px;top:599px;width:1px;height:20px;background:#A0A0A0"></div>
<div style="left:1149px;top:599px;width:99px;height:19px;overflow:hidden"><div class="t" style="left:2px;top:3px;font-size:12px;line-height:12px;color:#000000"><span style="display:inline-block;transform:scaleX(0.923);transform-origin:left">AUXILIO DICIEM...</span></div></div>
<div style="left:1348px;top:599px;width:1px;height:20px;background:#A0A0A0"></div>
<div style="left:1249px;top:599px;width:99px;height:19px;overflow:hidden"><div class="t" style="left:2px;top:3px;font-size:12px;line-height:12px;color:#000000"><span style="display:inline-block;transform:scaleX(0.943);transform-origin:left">16/01/2019 9:52:...</span></div></div>
<div style="left:1448px;top:599px;width:1px;height:20px;background:#A0A0A0"></div>
<div style="left:1349px;top:599px;width:99px;height:19px;overflow:hidden"><div class="t" style="left:2px;top:3px;font-size:12px;line-height:12px;color:#000000"><span style="display:inline-block;transform:scaleX(0.94);transform-origin:left">GINA</span></div></div>
<div style="left:23px;top:638px;width:1426px;height:1px;background:#A0A0A0"></div>
<div style="left:62px;top:619px;width:1px;height:20px;background:#A0A0A0"></div>
<div style="left:23px;top:619px;width:39px;height:19px;overflow:hidden"><div class="t" style="left:2px;top:3px;font-size:12px;line-height:12px;color:#000000"><span style="display:inline-block;transform:scaleX(0.86);transform-origin:left">CEGR</span></div></div>
<div style="left:118px;top:619px;width:1px;height:20px;background:#A0A0A0"></div>
<div style="left:63px;top:619px;width:55px;height:19px;overflow:hidden"><div class="t" style="left:2px;top:3px;font-size:12px;line-height:12px;color:#000000"><span style="display:inline-block;transform:scaleX(0.91);transform-origin:left">13</span></div></div>
<div style="left:218px;top:619px;width:1px;height:20px;background:#A0A0A0"></div>
<div style="left:119px;top:619px;width:99px;height:19px;overflow:hidden"><div class="t" style="left:2px;top:3px;font-size:12px;line-height:12px;color:#000000"><span style="display:inline-block;transform:scaleX(0.927);transform-origin:left">2019-01-04</span></div></div>
<div style="left:318px;top:619px;width:1px;height:20px;background:#A0A0A0"></div>
<div style="left:219px;top:619px;width:99px;height:19px;overflow:hidden"><div class="t" style="left:2px;top:3px;font-size:12px;line-height:12px;color:#000000"><span style="display:inline-block;transform:scaleX(0.932);transform-origin:left">2.08.01</span></div></div>
<div style="left:418px;top:619px;width:1px;height:20px;background:#A0A0A0"></div>
<div style="left:319px;top:619px;width:99px;height:19px;overflow:hidden"><div class="t" style="left:2px;top:3px;font-size:12px;line-height:12px;color:#000000"><span style="display:inline-block;transform:scaleX(0.974);transform-origin:left">Banco Bbva 342...</span></div></div>
<div style="left:518px;top:619px;width:1px;height:20px;background:#A0A0A0"></div>
<div style="left:419px;top:619px;width:99px;height:19px;overflow:hidden"><div class="t" style="left:2px;top:3px;font-size:12px;line-height:12px;color:#000000"><span style="display:inline-block;transform:scaleX(0.91);transform-origin:left">25050101</span></div></div>
<div style="left:618px;top:619px;width:1px;height:20px;background:#A0A0A0"></div>
<div class="t" style="top:622px;font-size:12px;line-height:12px;color:#000000;left:521px;"><span style="display:inline-block;transform:scaleX(0.989);transform-origin:left">Nomina</span></div>
<div class="t" style="top:622px;font-size:12px;line-height:12px;color:#000000;right:886px;text-align:right;">...</div>
<div style="left:718px;top:619px;width:1px;height:20px;background:#A0A0A0"></div>
<div class="t" style="top:622px;font-size:12px;line-height:12px;color:#000000;right:785px;text-align:right;"><span style="display:inline-block;transform:scaleX(0.924);transform-origin:right">208,638.00</span></div>
<div style="left:818px;top:619px;width:1px;height:20px;background:#A0A0A0"></div>
<div class="t" style="top:622px;font-size:12px;line-height:12px;color:#000000;right:685px;text-align:right;"><span style="display:inline-block;transform:scaleX(0.936);transform-origin:right">.00</span></div>
<div style="left:918px;top:619px;width:1px;height:20px;background:#A0A0A0"></div>
<div style="left:819px;top:619px;width:99px;height:19px;overflow:hidden"><div class="t" style="left:2px;top:3px;font-size:12px;line-height:12px;color:#000000"><span style="display:inline-block;transform:scaleX(0.91);transform-origin:left">71195016</span></div></div>
<div style="left:1018px;top:619px;width:1px;height:20px;background:#A0A0A0"></div>
<div style="left:919px;top:619px;width:99px;height:19px;overflow:hidden"><div class="t" style="left:2px;top:3px;font-size:12px;line-height:12px;color:#000000"><span style="display:inline-block;transform:scaleX(0.927);transform-origin:left">JUAN CARLOS ...</span></div></div>
<div style="left:1048px;top:619px;width:1px;height:20px;background:#A0A0A0"></div>
<div style="left:1019px;top:619px;width:29px;height:19px;overflow:hidden"><div class="t" style="left:2px;top:3px;font-size:12px;line-height:12px;color:#000000"><span style="display:inline-block;transform:scaleX(0.9);transform-origin:left">TRN</span></div></div>
<div style="left:1148px;top:619px;width:1px;height:20px;background:#A0A0A0"></div>
<div style="left:1049px;top:619px;width:99px;height:19px;overflow:hidden"><div class="t" style="left:2px;top:3px;font-size:12px;line-height:12px;color:#000000"><span style="display:inline-block;transform:scaleX(0.918);transform-origin:left">208638.00</span></div></div>
<div style="left:1248px;top:619px;width:1px;height:20px;background:#A0A0A0"></div>
<div style="left:1149px;top:619px;width:99px;height:19px;overflow:hidden"><div class="t" style="left:2px;top:3px;font-size:12px;line-height:12px;color:#000000"><span style="display:inline-block;transform:scaleX(0.923);transform-origin:left">AUXILIO DICIEM...</span></div></div>
<div style="left:1348px;top:619px;width:1px;height:20px;background:#A0A0A0"></div>
<div style="left:1249px;top:619px;width:99px;height:19px;overflow:hidden"><div class="t" style="left:2px;top:3px;font-size:12px;line-height:12px;color:#000000"><span style="display:inline-block;transform:scaleX(0.943);transform-origin:left">16/01/2019 9:54:...</span></div></div>
<div style="left:1448px;top:619px;width:1px;height:20px;background:#A0A0A0"></div>
<div style="left:1349px;top:619px;width:99px;height:19px;overflow:hidden"><div class="t" style="left:2px;top:3px;font-size:12px;line-height:12px;color:#000000"><span style="display:inline-block;transform:scaleX(0.94);transform-origin:left">GINA</span></div></div>
<div style="left:23px;top:658px;width:1426px;height:1px;background:#A0A0A0"></div>
<div style="left:62px;top:639px;width:1px;height:20px;background:#A0A0A0"></div>
<div style="left:23px;top:639px;width:39px;height:19px;overflow:hidden"><div class="t" style="left:2px;top:3px;font-size:12px;line-height:12px;color:#000000"><span style="display:inline-block;transform:scaleX(0.86);transform-origin:left">CEGR</span></div></div>
<div style="left:118px;top:639px;width:1px;height:20px;background:#A0A0A0"></div>
<div style="left:63px;top:639px;width:55px;height:19px;overflow:hidden"><div class="t" style="left:2px;top:3px;font-size:12px;line-height:12px;color:#000000"><span style="display:inline-block;transform:scaleX(0.91);transform-origin:left">14</span></div></div>
<div style="left:218px;top:639px;width:1px;height:20px;background:#A0A0A0"></div>
<div style="left:119px;top:639px;width:99px;height:19px;overflow:hidden"><div class="t" style="left:2px;top:3px;font-size:12px;line-height:12px;color:#000000"><span style="display:inline-block;transform:scaleX(0.927);transform-origin:left">2019-01-04</span></div></div>
<div style="left:318px;top:639px;width:1px;height:20px;background:#A0A0A0"></div>
<div style="left:219px;top:639px;width:99px;height:19px;overflow:hidden"><div class="t" style="left:2px;top:3px;font-size:12px;line-height:12px;color:#000000"><span style="display:inline-block;transform:scaleX(0.932);transform-origin:left">2.08.01</span></div></div>
<div style="left:418px;top:639px;width:1px;height:20px;background:#A0A0A0"></div>
<div style="left:319px;top:639px;width:99px;height:19px;overflow:hidden"><div class="t" style="left:2px;top:3px;font-size:12px;line-height:12px;color:#000000"><span style="display:inline-block;transform:scaleX(0.974);transform-origin:left">Banco Bbva 342...</span></div></div>
<div style="left:518px;top:639px;width:1px;height:20px;background:#A0A0A0"></div>
<div style="left:419px;top:639px;width:99px;height:19px;overflow:hidden"><div class="t" style="left:2px;top:3px;font-size:12px;line-height:12px;color:#000000"><span style="display:inline-block;transform:scaleX(0.91);transform-origin:left">25050101</span></div></div>
<div style="left:618px;top:639px;width:1px;height:20px;background:#A0A0A0"></div>
<div class="t" style="top:642px;font-size:12px;line-height:12px;color:#000000;left:521px;"><span style="display:inline-block;transform:scaleX(0.989);transform-origin:left">Nomina</span></div>
<div class="t" style="top:642px;font-size:12px;line-height:12px;color:#000000;right:886px;text-align:right;">...</div>
<div style="left:718px;top:639px;width:1px;height:20px;background:#A0A0A0"></div>
<div class="t" style="top:642px;font-size:12px;line-height:12px;color:#000000;right:785px;text-align:right;"><span style="display:inline-block;transform:scaleX(0.924);transform-origin:right">910,861.00</span></div>
<div style="left:818px;top:639px;width:1px;height:20px;background:#A0A0A0"></div>
<div class="t" style="top:642px;font-size:12px;line-height:12px;color:#000000;right:685px;text-align:right;"><span style="display:inline-block;transform:scaleX(0.936);transform-origin:right">.00</span></div>
<div style="left:918px;top:639px;width:1px;height:20px;background:#A0A0A0"></div>
<div style="left:819px;top:639px;width:99px;height:19px;overflow:hidden"><div class="t" style="left:2px;top:3px;font-size:12px;line-height:12px;color:#000000"><span style="display:inline-block;transform:scaleX(0.91);transform-origin:left">63531526</span></div></div>
<div style="left:1018px;top:639px;width:1px;height:20px;background:#A0A0A0"></div>
<div style="left:919px;top:639px;width:99px;height:19px;overflow:hidden"><div class="t" style="left:2px;top:3px;font-size:12px;line-height:12px;color:#000000"><span style="display:inline-block;transform:scaleX(0.924);transform-origin:left">MAGDA YURAN...</span></div></div>
<div style="left:1048px;top:639px;width:1px;height:20px;background:#A0A0A0"></div>
<div style="left:1019px;top:639px;width:29px;height:19px;overflow:hidden"><div class="t" style="left:2px;top:3px;font-size:12px;line-height:12px;color:#000000"><span style="display:inline-block;transform:scaleX(0.9);transform-origin:left">TRN</span></div></div>
<div style="left:1148px;top:639px;width:1px;height:20px;background:#A0A0A0"></div>
<div style="left:1049px;top:639px;width:99px;height:19px;overflow:hidden"><div class="t" style="left:2px;top:3px;font-size:12px;line-height:12px;color:#000000"><span style="display:inline-block;transform:scaleX(0.918);transform-origin:left">910861.00</span></div></div>
<div style="left:1248px;top:639px;width:1px;height:20px;background:#A0A0A0"></div>
<div style="left:1149px;top:639px;width:99px;height:19px;overflow:hidden"><div class="t" style="left:2px;top:3px;font-size:12px;line-height:12px;color:#000000"><span style="display:inline-block;transform:scaleX(0.923);transform-origin:left">AUXILIO DICIEM...</span></div></div>
<div style="left:1348px;top:639px;width:1px;height:20px;background:#A0A0A0"></div>
<div style="left:1249px;top:639px;width:99px;height:19px;overflow:hidden"><div class="t" style="left:2px;top:3px;font-size:12px;line-height:12px;color:#000000"><span style="display:inline-block;transform:scaleX(0.943);transform-origin:left">16/01/2019 9:55:...</span></div></div>
<div style="left:1448px;top:639px;width:1px;height:20px;background:#A0A0A0"></div>
<div style="left:1349px;top:639px;width:99px;height:19px;overflow:hidden"><div class="t" style="left:2px;top:3px;font-size:12px;line-height:12px;color:#000000"><span style="display:inline-block;transform:scaleX(0.94);transform-origin:left">GINA</span></div></div>
<div style="left:23px;top:678px;width:1426px;height:1px;background:#A0A0A0"></div>
<div style="left:62px;top:659px;width:1px;height:20px;background:#A0A0A0"></div>
<div style="left:23px;top:659px;width:39px;height:19px;overflow:hidden"><div class="t" style="left:2px;top:3px;font-size:12px;line-height:12px;color:#000000"><span style="display:inline-block;transform:scaleX(0.86);transform-origin:left">CEGR</span></div></div>
<div style="left:118px;top:659px;width:1px;height:20px;background:#A0A0A0"></div>
<div style="left:63px;top:659px;width:55px;height:19px;overflow:hidden"><div class="t" style="left:2px;top:3px;font-size:12px;line-height:12px;color:#000000"><span style="display:inline-block;transform:scaleX(0.91);transform-origin:left">15</span></div></div>
<div style="left:218px;top:659px;width:1px;height:20px;background:#A0A0A0"></div>
<div style="left:119px;top:659px;width:99px;height:19px;overflow:hidden"><div class="t" style="left:2px;top:3px;font-size:12px;line-height:12px;color:#000000"><span style="display:inline-block;transform:scaleX(0.927);transform-origin:left">2019-01-04</span></div></div>
<div style="left:318px;top:659px;width:1px;height:20px;background:#A0A0A0"></div>
<div style="left:219px;top:659px;width:99px;height:19px;overflow:hidden"><div class="t" style="left:2px;top:3px;font-size:12px;line-height:12px;color:#000000"><span style="display:inline-block;transform:scaleX(0.932);transform-origin:left">2.08.01</span></div></div>
<div style="left:418px;top:659px;width:1px;height:20px;background:#A0A0A0"></div>
<div style="left:319px;top:659px;width:99px;height:19px;overflow:hidden"><div class="t" style="left:2px;top:3px;font-size:12px;line-height:12px;color:#000000"><span style="display:inline-block;transform:scaleX(0.974);transform-origin:left">Banco Bbva 342...</span></div></div>
<div style="left:518px;top:659px;width:1px;height:20px;background:#A0A0A0"></div>
<div style="left:419px;top:659px;width:99px;height:19px;overflow:hidden"><div class="t" style="left:2px;top:3px;font-size:12px;line-height:12px;color:#000000"><span style="display:inline-block;transform:scaleX(0.91);transform-origin:left">25050101</span></div></div>
<div style="left:618px;top:659px;width:1px;height:20px;background:#A0A0A0"></div>
<div class="t" style="top:662px;font-size:12px;line-height:12px;color:#000000;left:521px;"><span style="display:inline-block;transform:scaleX(0.989);transform-origin:left">Nomina</span></div>
<div class="t" style="top:662px;font-size:12px;line-height:12px;color:#000000;right:886px;text-align:right;">...</div>
<div style="left:718px;top:659px;width:1px;height:20px;background:#A0A0A0"></div>
<div class="t" style="top:662px;font-size:12px;line-height:12px;color:#000000;right:785px;text-align:right;"><span style="display:inline-block;transform:scaleX(0.929);transform-origin:right">2,467,748.00</span></div>
<div style="left:818px;top:659px;width:1px;height:20px;background:#A0A0A0"></div>
<div class="t" style="top:662px;font-size:12px;line-height:12px;color:#000000;right:685px;text-align:right;"><span style="display:inline-block;transform:scaleX(0.936);transform-origin:right">.00</span></div>
<div style="left:918px;top:659px;width:1px;height:20px;background:#A0A0A0"></div>
<div style="left:819px;top:659px;width:99px;height:19px;overflow:hidden"><div class="t" style="left:2px;top:3px;font-size:12px;line-height:12px;color:#000000"><span style="display:inline-block;transform:scaleX(0.91);transform-origin:left">63531526</span></div></div>
<div style="left:1018px;top:659px;width:1px;height:20px;background:#A0A0A0"></div>
<div style="left:919px;top:659px;width:99px;height:19px;overflow:hidden"><div class="t" style="left:2px;top:3px;font-size:12px;line-height:12px;color:#000000"><span style="display:inline-block;transform:scaleX(0.924);transform-origin:left">MAGDA YURAN...</span></div></div>
<div style="left:1048px;top:659px;width:1px;height:20px;background:#A0A0A0"></div>
<div style="left:1019px;top:659px;width:29px;height:19px;overflow:hidden"><div class="t" style="left:2px;top:3px;font-size:12px;line-height:12px;color:#000000"><span style="display:inline-block;transform:scaleX(0.9);transform-origin:left">TRN</span></div></div>
<div style="left:1148px;top:659px;width:1px;height:20px;background:#A0A0A0"></div>
<div style="left:1049px;top:659px;width:99px;height:19px;overflow:hidden"><div class="t" style="left:2px;top:3px;font-size:12px;line-height:12px;color:#000000"><span style="display:inline-block;transform:scaleX(0.917);transform-origin:left">2467748.00</span></div></div>
<div style="left:1248px;top:659px;width:1px;height:20px;background:#A0A0A0"></div>
<div style="left:1149px;top:659px;width:99px;height:19px;overflow:hidden"><div class="t" style="left:2px;top:3px;font-size:12px;line-height:12px;color:#000000"><span style="display:inline-block;transform:scaleX(0.925);transform-origin:left">NOMINA DICIE...</span></div></div>
<div style="left:1348px;top:659px;width:1px;height:20px;background:#A0A0A0"></div>
<div style="left:1249px;top:659px;width:99px;height:19px;overflow:hidden"><div class="t" style="left:2px;top:3px;font-size:12px;line-height:12px;color:#000000"><span style="display:inline-block;transform:scaleX(0.943);transform-origin:left">16/01/2019 9:56:...</span></div></div>
<div style="left:1448px;top:659px;width:1px;height:20px;background:#A0A0A0"></div>
<div style="left:1349px;top:659px;width:99px;height:19px;overflow:hidden"><div class="t" style="left:2px;top:3px;font-size:12px;line-height:12px;color:#000000"><span style="display:inline-block;transform:scaleX(0.94);transform-origin:left">GINA</span></div></div>
<div style="left:23px;top:698px;width:1426px;height:1px;background:#A0A0A0"></div>
<div style="left:62px;top:679px;width:1px;height:20px;background:#A0A0A0"></div>
<div style="left:23px;top:679px;width:39px;height:19px;overflow:hidden"><div class="t" style="left:2px;top:3px;font-size:12px;line-height:12px;color:#000000"><span style="display:inline-block;transform:scaleX(0.86);transform-origin:left">CEGR</span></div></div>
<div style="left:118px;top:679px;width:1px;height:20px;background:#A0A0A0"></div>
<div style="left:63px;top:679px;width:55px;height:19px;overflow:hidden"><div class="t" style="left:2px;top:3px;font-size:12px;line-height:12px;color:#000000"><span style="display:inline-block;transform:scaleX(0.91);transform-origin:left">16</span></div></div>
<div style="left:218px;top:679px;width:1px;height:20px;background:#A0A0A0"></div>
<div style="left:119px;top:679px;width:99px;height:19px;overflow:hidden"><div class="t" style="left:2px;top:3px;font-size:12px;line-height:12px;color:#000000"><span style="display:inline-block;transform:scaleX(0.927);transform-origin:left">2019-01-04</span></div></div>
<div style="left:318px;top:679px;width:1px;height:20px;background:#A0A0A0"></div>
<div style="left:219px;top:679px;width:99px;height:19px;overflow:hidden"><div class="t" style="left:2px;top:3px;font-size:12px;line-height:12px;color:#000000"><span style="display:inline-block;transform:scaleX(0.932);transform-origin:left">2.08.01</span></div></div>
<div style="left:418px;top:679px;width:1px;height:20px;background:#A0A0A0"></div>
<div style="left:319px;top:679px;width:99px;height:19px;overflow:hidden"><div class="t" style="left:2px;top:3px;font-size:12px;line-height:12px;color:#000000"><span style="display:inline-block;transform:scaleX(0.974);transform-origin:left">Banco Bbva 342...</span></div></div>
<div style="left:518px;top:679px;width:1px;height:20px;background:#A0A0A0"></div>
<div style="left:419px;top:679px;width:99px;height:19px;overflow:hidden"><div class="t" style="left:2px;top:3px;font-size:12px;line-height:12px;color:#000000"><span style="display:inline-block;transform:scaleX(0.91);transform-origin:left">25050101</span></div></div>
<div style="left:618px;top:679px;width:1px;height:20px;background:#A0A0A0"></div>
<div class="t" style="top:682px;font-size:12px;line-height:12px;color:#000000;left:521px;"><span style="display:inline-block;transform:scaleX(0.989);transform-origin:left">Nomina</span></div>
<div class="t" style="top:682px;font-size:12px;line-height:12px;color:#000000;right:886px;text-align:right;">...</div>
<div style="left:718px;top:679px;width:1px;height:20px;background:#A0A0A0"></div>
<div class="t" style="top:682px;font-size:12px;line-height:12px;color:#000000;right:785px;text-align:right;"><span style="display:inline-block;transform:scaleX(0.924);transform-origin:right">420,321.00</span></div>
<div style="left:818px;top:679px;width:1px;height:20px;background:#A0A0A0"></div>
<div class="t" style="top:682px;font-size:12px;line-height:12px;color:#000000;right:685px;text-align:right;"><span style="display:inline-block;transform:scaleX(0.936);transform-origin:right">.00</span></div>
<div style="left:918px;top:679px;width:1px;height:20px;background:#A0A0A0"></div>
<div style="left:819px;top:679px;width:99px;height:19px;overflow:hidden"><div class="t" style="left:2px;top:3px;font-size:12px;line-height:12px;color:#000000"><span style="display:inline-block;transform:scaleX(0.91);transform-origin:left">1096189203</span></div></div>
<div style="left:1018px;top:679px;width:1px;height:20px;background:#A0A0A0"></div>
<div style="left:919px;top:679px;width:99px;height:19px;overflow:hidden"><div class="t" style="left:2px;top:3px;font-size:12px;line-height:12px;color:#000000"><span style="display:inline-block;transform:scaleX(0.926);transform-origin:left">LUIS CARLOS G...</span></div></div>
<div style="left:1048px;top:679px;width:1px;height:20px;background:#A0A0A0"></div>
<div style="left:1019px;top:679px;width:29px;height:19px;overflow:hidden"><div class="t" style="left:2px;top:3px;font-size:12px;line-height:12px;color:#000000"><span style="display:inline-block;transform:scaleX(0.9);transform-origin:left">TRN</span></div></div>
<div style="left:1148px;top:679px;width:1px;height:20px;background:#A0A0A0"></div>
<div style="left:1049px;top:679px;width:99px;height:19px;overflow:hidden"><div class="t" style="left:2px;top:3px;font-size:12px;line-height:12px;color:#000000"><span style="display:inline-block;transform:scaleX(0.918);transform-origin:left">420321.00</span></div></div>
<div style="left:1248px;top:679px;width:1px;height:20px;background:#A0A0A0"></div>
<div style="left:1149px;top:679px;width:99px;height:19px;overflow:hidden"><div class="t" style="left:2px;top:3px;font-size:12px;line-height:12px;color:#000000"><span style="display:inline-block;transform:scaleX(0.923);transform-origin:left">AUXILIO DICIEM...</span></div></div>
<div style="left:1348px;top:679px;width:1px;height:20px;background:#A0A0A0"></div>
<div style="left:1249px;top:679px;width:99px;height:19px;overflow:hidden"><div class="t" style="left:2px;top:3px;font-size:12px;line-height:12px;color:#000000"><span style="display:inline-block;transform:scaleX(0.943);transform-origin:left">16/01/2019 9:57:...</span></div></div>
<div style="left:1448px;top:679px;width:1px;height:20px;background:#A0A0A0"></div>
<div style="left:1349px;top:679px;width:99px;height:19px;overflow:hidden"><div class="t" style="left:2px;top:3px;font-size:12px;line-height:12px;color:#000000"><span style="display:inline-block;transform:scaleX(0.94);transform-origin:left">GINA</span></div></div>
<div style="left:23px;top:718px;width:1426px;height:1px;background:#A0A0A0"></div>
<div style="left:62px;top:699px;width:1px;height:20px;background:#A0A0A0"></div>
<div style="left:23px;top:699px;width:39px;height:19px;overflow:hidden"><div class="t" style="left:2px;top:3px;font-size:12px;line-height:12px;color:#000000"><span style="display:inline-block;transform:scaleX(0.86);transform-origin:left">CEGR</span></div></div>
<div style="left:118px;top:699px;width:1px;height:20px;background:#A0A0A0"></div>
<div style="left:63px;top:699px;width:55px;height:19px;overflow:hidden"><div class="t" style="left:2px;top:3px;font-size:12px;line-height:12px;color:#000000"><span style="display:inline-block;transform:scaleX(0.91);transform-origin:left">17</span></div></div>
<div style="left:218px;top:699px;width:1px;height:20px;background:#A0A0A0"></div>
<div style="left:119px;top:699px;width:99px;height:19px;overflow:hidden"><div class="t" style="left:2px;top:3px;font-size:12px;line-height:12px;color:#000000"><span style="display:inline-block;transform:scaleX(0.927);transform-origin:left">2019-01-04</span></div></div>
<div style="left:318px;top:699px;width:1px;height:20px;background:#A0A0A0"></div>
<div style="left:219px;top:699px;width:99px;height:19px;overflow:hidden"><div class="t" style="left:2px;top:3px;font-size:12px;line-height:12px;color:#000000"><span style="display:inline-block;transform:scaleX(0.932);transform-origin:left">2.08.01</span></div></div>
<div style="left:418px;top:699px;width:1px;height:20px;background:#A0A0A0"></div>
<div style="left:319px;top:699px;width:99px;height:19px;overflow:hidden"><div class="t" style="left:2px;top:3px;font-size:12px;line-height:12px;color:#000000"><span style="display:inline-block;transform:scaleX(0.974);transform-origin:left">Banco Bbva 342...</span></div></div>
<div style="left:518px;top:699px;width:1px;height:20px;background:#A0A0A0"></div>
<div style="left:419px;top:699px;width:99px;height:19px;overflow:hidden"><div class="t" style="left:2px;top:3px;font-size:12px;line-height:12px;color:#000000"><span style="display:inline-block;transform:scaleX(0.91);transform-origin:left">25050101</span></div></div>
<div style="left:618px;top:699px;width:1px;height:20px;background:#A0A0A0"></div>
<div class="t" style="top:702px;font-size:12px;line-height:12px;color:#000000;left:521px;"><span style="display:inline-block;transform:scaleX(0.989);transform-origin:left">Nomina</span></div>
<div class="t" style="top:702px;font-size:12px;line-height:12px;color:#000000;right:886px;text-align:right;">...</div>
<div style="left:718px;top:699px;width:1px;height:20px;background:#A0A0A0"></div>
<div class="t" style="top:702px;font-size:12px;line-height:12px;color:#000000;right:785px;text-align:right;"><span style="display:inline-block;transform:scaleX(0.929);transform-origin:right">1,721,282.00</span></div>
<div style="left:818px;top:699px;width:1px;height:20px;background:#A0A0A0"></div>
<div class="t" style="top:702px;font-size:12px;line-height:12px;color:#000000;right:685px;text-align:right;"><span style="display:inline-block;transform:scaleX(0.936);transform-origin:right">.00</span></div>
<div style="left:918px;top:699px;width:1px;height:20px;background:#A0A0A0"></div>
<div style="left:819px;top:699px;width:99px;height:19px;overflow:hidden"><div class="t" style="left:2px;top:3px;font-size:12px;line-height:12px;color:#000000"><span style="display:inline-block;transform:scaleX(0.91);transform-origin:left">17586412</span></div></div>
<div style="left:1018px;top:699px;width:1px;height:20px;background:#A0A0A0"></div>
<div style="left:919px;top:699px;width:99px;height:19px;overflow:hidden"><div class="t" style="left:2px;top:3px;font-size:12px;line-height:12px;color:#000000"><span style="display:inline-block;transform:scaleX(0.927);transform-origin:left">GONZALO  LAR...</span></div></div>
<div style="left:1048px;top:699px;width:1px;height:20px;background:#A0A0A0"></div>
<div style="left:1019px;top:699px;width:29px;height:19px;overflow:hidden"><div class="t" style="left:2px;top:3px;font-size:12px;line-height:12px;color:#000000"><span style="display:inline-block;transform:scaleX(0.9);transform-origin:left">TRN</span></div></div>
<div style="left:1148px;top:699px;width:1px;height:20px;background:#A0A0A0"></div>
<div style="left:1049px;top:699px;width:99px;height:19px;overflow:hidden"><div class="t" style="left:2px;top:3px;font-size:12px;line-height:12px;color:#000000"><span style="display:inline-block;transform:scaleX(0.917);transform-origin:left">1721282.00</span></div></div>
<div style="left:1248px;top:699px;width:1px;height:20px;background:#A0A0A0"></div>
<div style="left:1149px;top:699px;width:99px;height:19px;overflow:hidden"><div class="t" style="left:2px;top:3px;font-size:12px;line-height:12px;color:#000000"><span style="display:inline-block;transform:scaleX(0.923);transform-origin:left">AUXILIO DICIEM...</span></div></div>
<div style="left:1348px;top:699px;width:1px;height:20px;background:#A0A0A0"></div>
<div style="left:1249px;top:699px;width:99px;height:19px;overflow:hidden"><div class="t" style="left:2px;top:3px;font-size:12px;line-height:12px;color:#000000"><span style="display:inline-block;transform:scaleX(0.94);transform-origin:left">16/01/2019 10:1...</span></div></div>
<div style="left:1448px;top:699px;width:1px;height:20px;background:#A0A0A0"></div>
<div style="left:1349px;top:699px;width:99px;height:19px;overflow:hidden"><div class="t" style="left:2px;top:3px;font-size:12px;line-height:12px;color:#000000"><span style="display:inline-block;transform:scaleX(0.94);transform-origin:left">GINA</span></div></div>
<div style="left:23px;top:738px;width:1426px;height:1px;background:#A0A0A0"></div>
<div style="left:62px;top:719px;width:1px;height:20px;background:#A0A0A0"></div>
<div style="left:23px;top:719px;width:39px;height:19px;overflow:hidden"><div class="t" style="left:2px;top:3px;font-size:12px;line-height:12px;color:#000000"><span style="display:inline-block;transform:scaleX(0.86);transform-origin:left">CEGR</span></div></div>
<div style="left:118px;top:719px;width:1px;height:20px;background:#A0A0A0"></div>
<div style="left:63px;top:719px;width:55px;height:19px;overflow:hidden"><div class="t" style="left:2px;top:3px;font-size:12px;line-height:12px;color:#000000"><span style="display:inline-block;transform:scaleX(0.91);transform-origin:left">18</span></div></div>
<div style="left:218px;top:719px;width:1px;height:20px;background:#A0A0A0"></div>
<div style="left:119px;top:719px;width:99px;height:19px;overflow:hidden"><div class="t" style="left:2px;top:3px;font-size:12px;line-height:12px;color:#000000"><span style="display:inline-block;transform:scaleX(0.927);transform-origin:left">2019-01-04</span></div></div>
<div style="left:318px;top:719px;width:1px;height:20px;background:#A0A0A0"></div>
<div style="left:219px;top:719px;width:99px;height:19px;overflow:hidden"><div class="t" style="left:2px;top:3px;font-size:12px;line-height:12px;color:#000000"><span style="display:inline-block;transform:scaleX(0.932);transform-origin:left">2.08.01</span></div></div>
<div style="left:418px;top:719px;width:1px;height:20px;background:#A0A0A0"></div>
<div style="left:319px;top:719px;width:99px;height:19px;overflow:hidden"><div class="t" style="left:2px;top:3px;font-size:12px;line-height:12px;color:#000000"><span style="display:inline-block;transform:scaleX(0.974);transform-origin:left">Banco Bbva 342...</span></div></div>
<div style="left:518px;top:719px;width:1px;height:20px;background:#A0A0A0"></div>
<div style="left:419px;top:719px;width:99px;height:19px;overflow:hidden"><div class="t" style="left:2px;top:3px;font-size:12px;line-height:12px;color:#000000"><span style="display:inline-block;transform:scaleX(0.91);transform-origin:left">25050101</span></div></div>
<div style="left:618px;top:719px;width:1px;height:20px;background:#A0A0A0"></div>
<div class="t" style="top:722px;font-size:12px;line-height:12px;color:#000000;left:521px;"><span style="display:inline-block;transform:scaleX(0.989);transform-origin:left">Nomina</span></div>
<div class="t" style="top:722px;font-size:12px;line-height:12px;color:#000000;right:886px;text-align:right;">...</div>
<div style="left:718px;top:719px;width:1px;height:20px;background:#A0A0A0"></div>
<div class="t" style="top:722px;font-size:12px;line-height:12px;color:#000000;right:785px;text-align:right;"><span style="display:inline-block;transform:scaleX(0.924);transform-origin:right">113,296.00</span></div>
<div style="left:818px;top:719px;width:1px;height:20px;background:#A0A0A0"></div>
<div class="t" style="top:722px;font-size:12px;line-height:12px;color:#000000;right:685px;text-align:right;"><span style="display:inline-block;transform:scaleX(0.936);transform-origin:right">.00</span></div>
<div style="left:918px;top:719px;width:1px;height:20px;background:#A0A0A0"></div>
<div style="left:819px;top:719px;width:99px;height:19px;overflow:hidden"><div class="t" style="left:2px;top:3px;font-size:12px;line-height:12px;color:#000000"><span style="display:inline-block;transform:scaleX(0.91);transform-origin:left">1096189870</span></div></div>
<div style="left:1018px;top:719px;width:1px;height:20px;background:#A0A0A0"></div>
<div style="left:919px;top:719px;width:99px;height:19px;overflow:hidden"><div class="t" style="left:2px;top:3px;font-size:12px;line-height:12px;color:#000000"><span style="display:inline-block;transform:scaleX(0.895);transform-origin:left">LUIS ENRIQUE R...</span></div></div>
<div style="left:1048px;top:719px;width:1px;height:20px;background:#A0A0A0"></div>
<div style="left:1019px;top:719px;width:29px;height:19px;overflow:hidden"><div class="t" style="left:2px;top:3px;font-size:12px;line-height:12px;color:#000000"><span style="display:inline-block;transform:scaleX(0.9);transform-origin:left">TRN</span></div></div>
<div style="left:1148px;top:719px;width:1px;height:20px;background:#A0A0A0"></div>
<div style="left:1049px;top:719px;width:99px;height:19px;overflow:hidden"><div class="t" style="left:2px;top:3px;font-size:12px;line-height:12px;color:#000000"><span style="display:inline-block;transform:scaleX(0.918);transform-origin:left">113296.00</span></div></div>
<div style="left:1248px;top:719px;width:1px;height:20px;background:#A0A0A0"></div>
<div style="left:1149px;top:719px;width:99px;height:19px;overflow:hidden"><div class="t" style="left:2px;top:3px;font-size:12px;line-height:12px;color:#000000"><span style="display:inline-block;transform:scaleX(0.923);transform-origin:left">AUXILIO DICIEM...</span></div></div>
<div style="left:1348px;top:719px;width:1px;height:20px;background:#A0A0A0"></div>
<div style="left:1249px;top:719px;width:99px;height:19px;overflow:hidden"><div class="t" style="left:2px;top:3px;font-size:12px;line-height:12px;color:#000000"><span style="display:inline-block;transform:scaleX(0.94);transform-origin:left">16/01/2019 10:1...</span></div></div>
<div style="left:1448px;top:719px;width:1px;height:20px;background:#A0A0A0"></div>
<div style="left:1349px;top:719px;width:99px;height:19px;overflow:hidden"><div class="t" style="left:2px;top:3px;font-size:12px;line-height:12px;color:#000000"><span style="display:inline-block;transform:scaleX(0.94);transform-origin:left">GINA</span></div></div>
<div style="left:23px;top:758px;width:1426px;height:1px;background:#A0A0A0"></div>
<div style="left:62px;top:739px;width:1px;height:20px;background:#A0A0A0"></div>
<div style="left:23px;top:739px;width:39px;height:19px;overflow:hidden"><div class="t" style="left:2px;top:3px;font-size:12px;line-height:12px;color:#000000"><span style="display:inline-block;transform:scaleX(0.86);transform-origin:left">CEGR</span></div></div>
<div style="left:118px;top:739px;width:1px;height:20px;background:#A0A0A0"></div>
<div style="left:63px;top:739px;width:55px;height:19px;overflow:hidden"><div class="t" style="left:2px;top:3px;font-size:12px;line-height:12px;color:#000000"><span style="display:inline-block;transform:scaleX(0.91);transform-origin:left">19</span></div></div>
<div style="left:218px;top:739px;width:1px;height:20px;background:#A0A0A0"></div>
<div style="left:119px;top:739px;width:99px;height:19px;overflow:hidden"><div class="t" style="left:2px;top:3px;font-size:12px;line-height:12px;color:#000000"><span style="display:inline-block;transform:scaleX(0.927);transform-origin:left">2019-01-04</span></div></div>
<div style="left:318px;top:739px;width:1px;height:20px;background:#A0A0A0"></div>
<div style="left:219px;top:739px;width:99px;height:19px;overflow:hidden"><div class="t" style="left:2px;top:3px;font-size:12px;line-height:12px;color:#000000"><span style="display:inline-block;transform:scaleX(0.932);transform-origin:left">2.08.01</span></div></div>
<div style="left:418px;top:739px;width:1px;height:20px;background:#A0A0A0"></div>
<div style="left:319px;top:739px;width:99px;height:19px;overflow:hidden"><div class="t" style="left:2px;top:3px;font-size:12px;line-height:12px;color:#000000"><span style="display:inline-block;transform:scaleX(0.974);transform-origin:left">Banco Bbva 342...</span></div></div>
<div style="left:518px;top:739px;width:1px;height:20px;background:#A0A0A0"></div>
<div style="left:419px;top:739px;width:99px;height:19px;overflow:hidden"><div class="t" style="left:2px;top:3px;font-size:12px;line-height:12px;color:#000000"><span style="display:inline-block;transform:scaleX(0.91);transform-origin:left">25050101</span></div></div>
<div style="left:618px;top:739px;width:1px;height:20px;background:#A0A0A0"></div>
<div class="t" style="top:742px;font-size:12px;line-height:12px;color:#000000;left:521px;"><span style="display:inline-block;transform:scaleX(0.989);transform-origin:left">Nomina</span></div>
<div class="t" style="top:742px;font-size:12px;line-height:12px;color:#000000;right:886px;text-align:right;">...</div>
<div style="left:718px;top:739px;width:1px;height:20px;background:#A0A0A0"></div>
<div class="t" style="top:742px;font-size:12px;line-height:12px;color:#000000;right:785px;text-align:right;"><span style="display:inline-block;transform:scaleX(0.924);transform-origin:right">210,532.00</span></div>
<div style="left:818px;top:739px;width:1px;height:20px;background:#A0A0A0"></div>
<div class="t" style="top:742px;font-size:12px;line-height:12px;color:#000000;right:685px;text-align:right;"><span style="display:inline-block;transform:scaleX(0.936);transform-origin:right">.00</span></div>
<div style="left:918px;top:739px;width:1px;height:20px;background:#A0A0A0"></div>
<div style="left:819px;top:739px;width:99px;height:19px;overflow:hidden"><div class="t" style="left:2px;top:3px;font-size:12px;line-height:12px;color:#000000"><span style="display:inline-block;transform:scaleX(0.91);transform-origin:left">1096189870</span></div></div>
<div style="left:1018px;top:739px;width:1px;height:20px;background:#A0A0A0"></div>
<div style="left:919px;top:739px;width:99px;height:19px;overflow:hidden"><div class="t" style="left:2px;top:3px;font-size:12px;line-height:12px;color:#000000"><span style="display:inline-block;transform:scaleX(0.895);transform-origin:left">LUIS ENRIQUE R...</span></div></div>
<div style="left:1048px;top:739px;width:1px;height:20px;background:#A0A0A0"></div>
<div style="left:1019px;top:739px;width:29px;height:19px;overflow:hidden"><div class="t" style="left:2px;top:3px;font-size:12px;line-height:12px;color:#000000"><span style="display:inline-block;transform:scaleX(0.9);transform-origin:left">TRN</span></div></div>
<div style="left:1148px;top:739px;width:1px;height:20px;background:#A0A0A0"></div>
<div style="left:1049px;top:739px;width:99px;height:19px;overflow:hidden"><div class="t" style="left:2px;top:3px;font-size:12px;line-height:12px;color:#000000"><span style="display:inline-block;transform:scaleX(0.918);transform-origin:left">210532.00</span></div></div>
<div style="left:1248px;top:739px;width:1px;height:20px;background:#A0A0A0"></div>
<div style="left:1149px;top:739px;width:99px;height:19px;overflow:hidden"><div class="t" style="left:2px;top:3px;font-size:12px;line-height:12px;color:#000000"><span style="display:inline-block;transform:scaleX(0.923);transform-origin:left">AUXILIO DICIEM...</span></div></div>
<div style="left:1348px;top:739px;width:1px;height:20px;background:#A0A0A0"></div>
<div style="left:1249px;top:739px;width:99px;height:19px;overflow:hidden"><div class="t" style="left:2px;top:3px;font-size:12px;line-height:12px;color:#000000"><span style="display:inline-block;transform:scaleX(0.94);transform-origin:left">16/01/2019 10:1...</span></div></div>
<div style="left:1448px;top:739px;width:1px;height:20px;background:#A0A0A0"></div>
<div style="left:1349px;top:739px;width:99px;height:19px;overflow:hidden"><div class="t" style="left:2px;top:3px;font-size:12px;line-height:12px;color:#000000"><span style="display:inline-block;transform:scaleX(0.94);transform-origin:left">GINA</span></div></div>
<div style="left:23px;top:778px;width:1426px;height:1px;background:#A0A0A0"></div>
<div style="left:62px;top:759px;width:1px;height:20px;background:#A0A0A0"></div>
<div style="left:23px;top:759px;width:39px;height:19px;overflow:hidden"><div class="t" style="left:2px;top:3px;font-size:12px;line-height:12px;color:#000000"><span style="display:inline-block;transform:scaleX(0.86);transform-origin:left">CEGR</span></div></div>
<div style="left:118px;top:759px;width:1px;height:20px;background:#A0A0A0"></div>
<div style="left:63px;top:759px;width:55px;height:19px;overflow:hidden"><div class="t" style="left:2px;top:3px;font-size:12px;line-height:12px;color:#000000"><span style="display:inline-block;transform:scaleX(0.91);transform-origin:left">20</span></div></div>
<div style="left:218px;top:759px;width:1px;height:20px;background:#A0A0A0"></div>
<div style="left:119px;top:759px;width:99px;height:19px;overflow:hidden"><div class="t" style="left:2px;top:3px;font-size:12px;line-height:12px;color:#000000"><span style="display:inline-block;transform:scaleX(0.927);transform-origin:left">2019-01-04</span></div></div>
<div style="left:318px;top:759px;width:1px;height:20px;background:#A0A0A0"></div>
<div style="left:219px;top:759px;width:99px;height:19px;overflow:hidden"><div class="t" style="left:2px;top:3px;font-size:12px;line-height:12px;color:#000000"><span style="display:inline-block;transform:scaleX(0.932);transform-origin:left">2.08.01</span></div></div>
<div style="left:418px;top:759px;width:1px;height:20px;background:#A0A0A0"></div>
<div style="left:319px;top:759px;width:99px;height:19px;overflow:hidden"><div class="t" style="left:2px;top:3px;font-size:12px;line-height:12px;color:#000000"><span style="display:inline-block;transform:scaleX(0.974);transform-origin:left">Banco Bbva 342...</span></div></div>
<div style="left:518px;top:759px;width:1px;height:20px;background:#A0A0A0"></div>
<div style="left:419px;top:759px;width:99px;height:19px;overflow:hidden"><div class="t" style="left:2px;top:3px;font-size:12px;line-height:12px;color:#000000"><span style="display:inline-block;transform:scaleX(0.91);transform-origin:left">25050101</span></div></div>
<div style="left:618px;top:759px;width:1px;height:20px;background:#A0A0A0"></div>
<div class="t" style="top:762px;font-size:12px;line-height:12px;color:#000000;left:521px;"><span style="display:inline-block;transform:scaleX(0.989);transform-origin:left">Nomina</span></div>
<div class="t" style="top:762px;font-size:12px;line-height:12px;color:#000000;right:886px;text-align:right;">...</div>
<div style="left:718px;top:759px;width:1px;height:20px;background:#A0A0A0"></div>
<div class="t" style="top:762px;font-size:12px;line-height:12px;color:#000000;right:785px;text-align:right;"><span style="display:inline-block;transform:scaleX(0.924);transform-origin:right">303,696.00</span></div>
<div style="left:818px;top:759px;width:1px;height:20px;background:#A0A0A0"></div>
<div class="t" style="top:762px;font-size:12px;line-height:12px;color:#000000;right:685px;text-align:right;"><span style="display:inline-block;transform:scaleX(0.936);transform-origin:right">.00</span></div>
<div style="left:918px;top:759px;width:1px;height:20px;background:#A0A0A0"></div>
<div style="left:819px;top:759px;width:99px;height:19px;overflow:hidden"><div class="t" style="left:2px;top:3px;font-size:12px;line-height:12px;color:#000000"><span style="display:inline-block;transform:scaleX(0.91);transform-origin:left">13568987</span></div></div>
<div style="left:1018px;top:759px;width:1px;height:20px;background:#A0A0A0"></div>
<div style="left:919px;top:759px;width:99px;height:19px;overflow:hidden"><div class="t" style="left:2px;top:3px;font-size:12px;line-height:12px;color:#000000"><span style="display:inline-block;transform:scaleX(0.927);transform-origin:left">FERNANDO  TR...</span></div></div>
<div style="left:1048px;top:759px;width:1px;height:20px;background:#A0A0A0"></div>
<div style="left:1019px;top:759px;width:29px;height:19px;overflow:hidden"><div class="t" style="left:2px;top:3px;font-size:12px;line-height:12px;color:#000000"><span style="display:inline-block;transform:scaleX(0.9);transform-origin:left">TRN</span></div></div>
<div style="left:1148px;top:759px;width:1px;height:20px;background:#A0A0A0"></div>
<div style="left:1049px;top:759px;width:99px;height:19px;overflow:hidden"><div class="t" style="left:2px;top:3px;font-size:12px;line-height:12px;color:#000000"><span style="display:inline-block;transform:scaleX(0.918);transform-origin:left">303696.00</span></div></div>
<div style="left:1248px;top:759px;width:1px;height:20px;background:#A0A0A0"></div>
<div style="left:1149px;top:759px;width:99px;height:19px;overflow:hidden"><div class="t" style="left:2px;top:3px;font-size:12px;line-height:12px;color:#000000"><span style="display:inline-block;transform:scaleX(0.923);transform-origin:left">AUXILIO DICIEM...</span></div></div>
<div style="left:1348px;top:759px;width:1px;height:20px;background:#A0A0A0"></div>
<div style="left:1249px;top:759px;width:99px;height:19px;overflow:hidden"><div class="t" style="left:2px;top:3px;font-size:12px;line-height:12px;color:#000000"><span style="display:inline-block;transform:scaleX(0.94);transform-origin:left">16/01/2019 10:1...</span></div></div>
<div style="left:1448px;top:759px;width:1px;height:20px;background:#A0A0A0"></div>
<div style="left:1349px;top:759px;width:99px;height:19px;overflow:hidden"><div class="t" style="left:2px;top:3px;font-size:12px;line-height:12px;color:#000000"><span style="display:inline-block;transform:scaleX(0.94);transform-origin:left">GINA</span></div></div>
<div style="left:23px;top:798px;width:1426px;height:1px;background:#A0A0A0"></div>
<div style="left:62px;top:779px;width:1px;height:20px;background:#A0A0A0"></div>
<div style="left:23px;top:779px;width:39px;height:19px;overflow:hidden"><div class="t" style="left:2px;top:3px;font-size:12px;line-height:12px;color:#000000"><span style="display:inline-block;transform:scaleX(0.86);transform-origin:left">CEGR</span></div></div>
<div style="left:118px;top:779px;width:1px;height:20px;background:#A0A0A0"></div>
<div style="left:63px;top:779px;width:55px;height:19px;overflow:hidden"><div class="t" style="left:2px;top:3px;font-size:12px;line-height:12px;color:#000000"><span style="display:inline-block;transform:scaleX(0.91);transform-origin:left">21</span></div></div>
<div style="left:218px;top:779px;width:1px;height:20px;background:#A0A0A0"></div>
<div style="left:119px;top:779px;width:99px;height:19px;overflow:hidden"><div class="t" style="left:2px;top:3px;font-size:12px;line-height:12px;color:#000000"><span style="display:inline-block;transform:scaleX(0.927);transform-origin:left">2019-01-04</span></div></div>
<div style="left:318px;top:779px;width:1px;height:20px;background:#A0A0A0"></div>
<div style="left:219px;top:779px;width:99px;height:19px;overflow:hidden"><div class="t" style="left:2px;top:3px;font-size:12px;line-height:12px;color:#000000"><span style="display:inline-block;transform:scaleX(0.932);transform-origin:left">2.08.01</span></div></div>
<div style="left:418px;top:779px;width:1px;height:20px;background:#A0A0A0"></div>
<div style="left:319px;top:779px;width:99px;height:19px;overflow:hidden"><div class="t" style="left:2px;top:3px;font-size:12px;line-height:12px;color:#000000"><span style="display:inline-block;transform:scaleX(0.974);transform-origin:left">Banco Bbva 342...</span></div></div>
<div style="left:518px;top:779px;width:1px;height:20px;background:#A0A0A0"></div>
<div style="left:419px;top:779px;width:99px;height:19px;overflow:hidden"><div class="t" style="left:2px;top:3px;font-size:12px;line-height:12px;color:#000000"><span style="display:inline-block;transform:scaleX(0.91);transform-origin:left">25050101</span></div></div>
<div style="left:618px;top:779px;width:1px;height:20px;background:#A0A0A0"></div>
<div class="t" style="top:782px;font-size:12px;line-height:12px;color:#000000;left:521px;"><span style="display:inline-block;transform:scaleX(0.989);transform-origin:left">Nomina</span></div>
<div class="t" style="top:782px;font-size:12px;line-height:12px;color:#000000;right:886px;text-align:right;">...</div>
<div style="left:718px;top:779px;width:1px;height:20px;background:#A0A0A0"></div>
<div class="t" style="top:782px;font-size:12px;line-height:12px;color:#000000;right:785px;text-align:right;"><span style="display:inline-block;transform:scaleX(0.926);transform-origin:right">56,369.00</span></div>
<div style="left:818px;top:779px;width:1px;height:20px;background:#A0A0A0"></div>
<div class="t" style="top:782px;font-size:12px;line-height:12px;color:#000000;right:685px;text-align:right;"><span style="display:inline-block;transform:scaleX(0.936);transform-origin:right">.00</span></div>
<div style="left:918px;top:779px;width:1px;height:20px;background:#A0A0A0"></div>
<div style="left:819px;top:779px;width:99px;height:19px;overflow:hidden"><div class="t" style="left:2px;top:3px;font-size:12px;line-height:12px;color:#000000"><span style="display:inline-block;transform:scaleX(0.91);transform-origin:left">13568987</span></div></div>
<div style="left:1018px;top:779px;width:1px;height:20px;background:#A0A0A0"></div>
<div style="left:919px;top:779px;width:99px;height:19px;overflow:hidden"><div class="t" style="left:2px;top:3px;font-size:12px;line-height:12px;color:#000000"><span style="display:inline-block;transform:scaleX(0.927);transform-origin:left">FERNANDO  TR...</span></div></div>
<div style="left:1048px;top:779px;width:1px;height:20px;background:#A0A0A0"></div>
<div style="left:1019px;top:779px;width:29px;height:19px;overflow:hidden"><div class="t" style="left:2px;top:3px;font-size:12px;line-height:12px;color:#000000"><span style="display:inline-block;transform:scaleX(0.9);transform-origin:left">TRN</span></div></div>
<div style="left:1148px;top:779px;width:1px;height:20px;background:#A0A0A0"></div>
<div style="left:1049px;top:779px;width:99px;height:19px;overflow:hidden"><div class="t" style="left:2px;top:3px;font-size:12px;line-height:12px;color:#000000"><span style="display:inline-block;transform:scaleX(0.919);transform-origin:left">56369.00</span></div></div>
<div style="left:1248px;top:779px;width:1px;height:20px;background:#A0A0A0"></div>
<div style="left:1149px;top:779px;width:99px;height:19px;overflow:hidden"><div class="t" style="left:2px;top:3px;font-size:12px;line-height:12px;color:#000000"><span style="display:inline-block;transform:scaleX(0.923);transform-origin:left">AUXILIO DICIEM...</span></div></div>
<div style="left:1348px;top:779px;width:1px;height:20px;background:#A0A0A0"></div>
<div style="left:1249px;top:779px;width:99px;height:19px;overflow:hidden"><div class="t" style="left:2px;top:3px;font-size:12px;line-height:12px;color:#000000"><span style="display:inline-block;transform:scaleX(0.94);transform-origin:left">16/01/2019 10:2...</span></div></div>
<div style="left:1448px;top:779px;width:1px;height:20px;background:#A0A0A0"></div>
<div style="left:1349px;top:779px;width:99px;height:19px;overflow:hidden"><div class="t" style="left:2px;top:3px;font-size:12px;line-height:12px;color:#000000"><span style="display:inline-block;transform:scaleX(0.94);transform-origin:left">GINA</span></div></div>
<div style="left:1460px;top:376px;width:16px;height:423px;background:#F0F0F0"></div>
<div style="left:1460px;top:393px;width:15px;height:17px;background:#CDCDCD"></div>
<svg style="left:1463px;top:381px" width="10" height="8" viewBox="0 0 10 8"><path d="M1,6.5 L5,2.5 L9,6.5" fill="none" stroke="#606060" stroke-width="2"/></svg>
<svg style="left:1463px;top:787px" width="10" height="8" viewBox="0 0 10 8"><path d="M1,1.5 L5,5.5 L9,1.5" fill="none" stroke="#606060" stroke-width="2"/></svg>
<div style="left:21px;top:817px;width:344px;height:19px;border:1px solid #CCCCCC;box-shadow:inset 0 0 0 1px #FFFFFF"></div>
<div style="left:1375px;top:818px;width:94px;height:20px;border:1px solid #FFFFFF"></div>
<div style="left:1376px;top:819px;width:92px;height:18px;border:1px solid #ADADAD;background:#E1E1E1"></div>
<div class="t" style="top:823px;font-size:12px;line-height:12px;color:#000;left:1387px;"><span style="display:inline-block;transform:scaleX(0.886);transform-origin:left">Exportarlo(Csv)</span></div>
</body></html>
